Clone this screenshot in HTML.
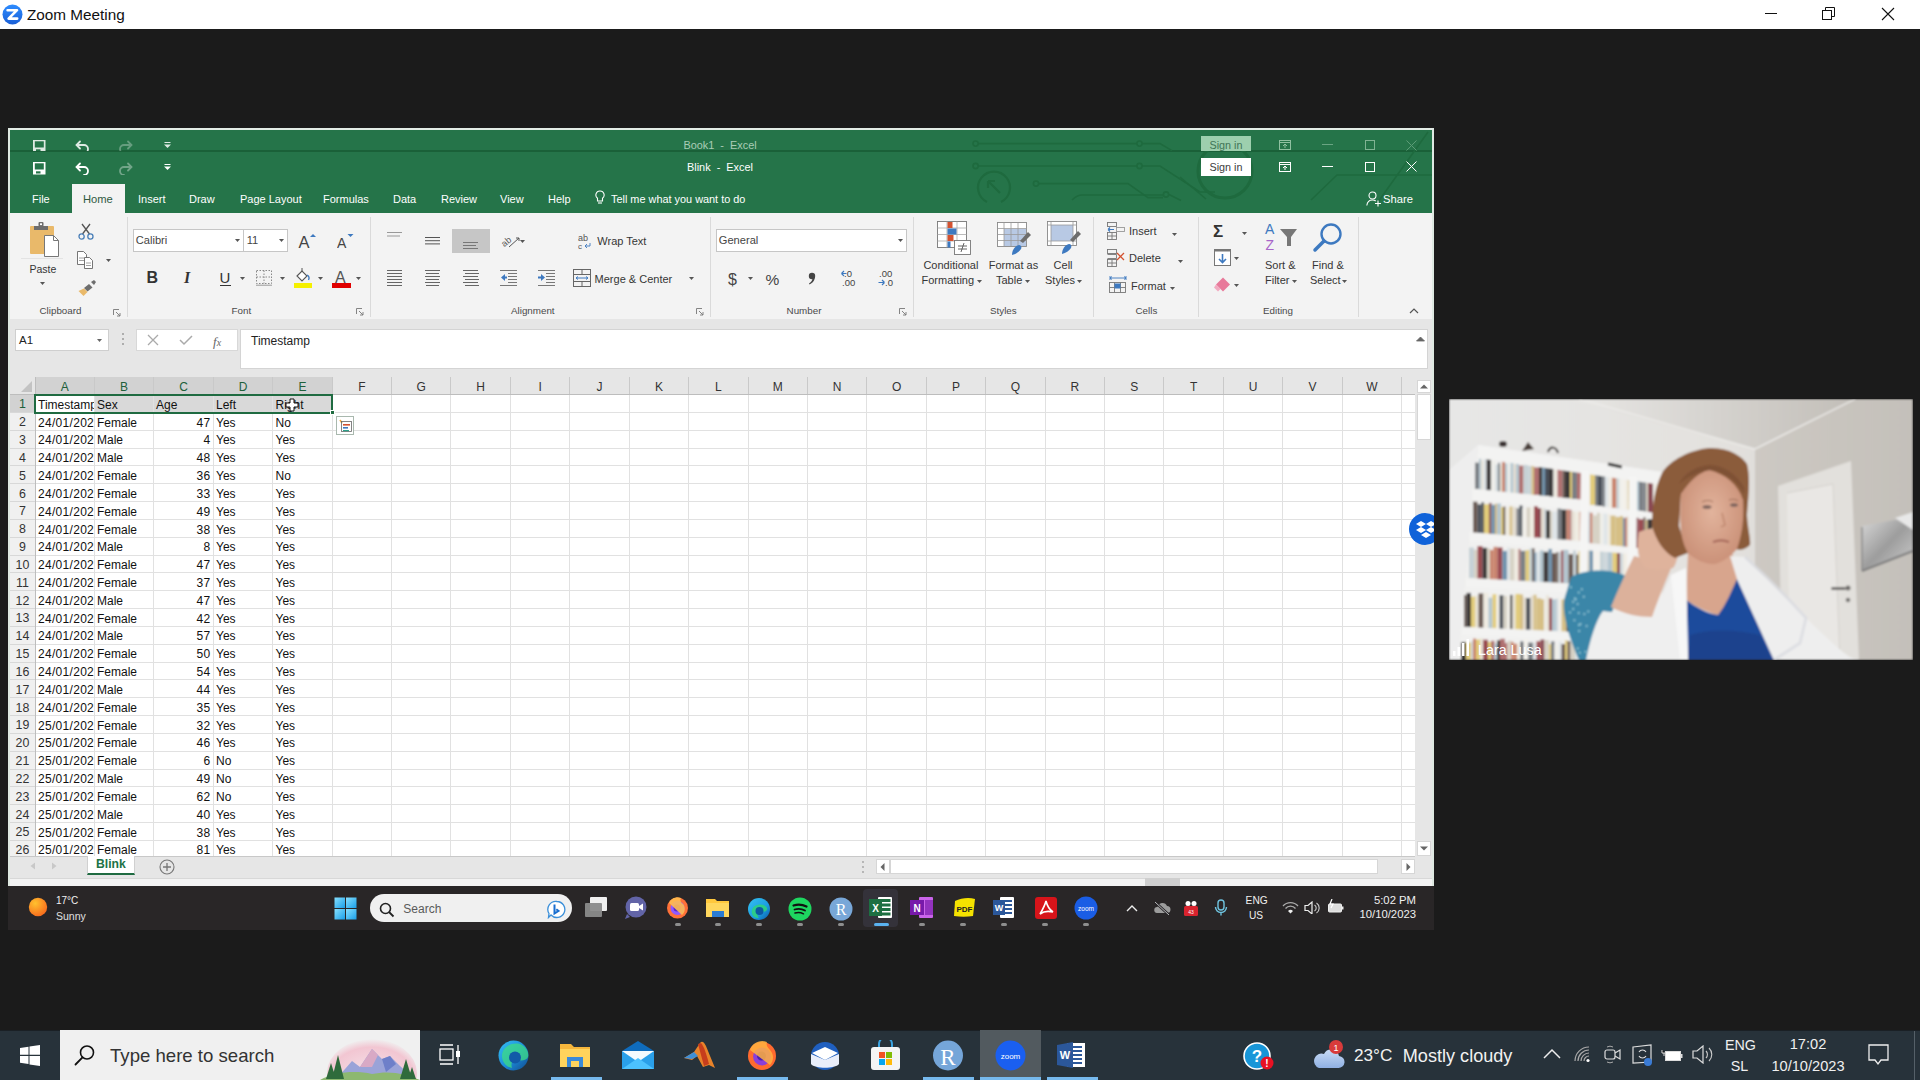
<!DOCTYPE html>
<html><head><meta charset="utf-8">
<style>
*{margin:0;padding:0;box-sizing:border-box}
html,body{width:1920px;height:1080px;overflow:hidden;background:#1b1b1b;font-family:"Liberation Sans",sans-serif;position:relative}
div,span,svg{position:absolute}
.t{white-space:pre;line-height:1}
.w{color:#fff}

</style></head><body>
<div style="left:0px;top:0px;width:1920px;height:29px;background:#fff;"></div>
<svg style="left:2px;top:4px;" width="21" height="21" viewBox="0 0 21 21"><defs><linearGradient id="zg" x1="0" y1="0" x2="0" y2="1"><stop offset="0" stop-color="#2d8cff"/><stop offset="1" stop-color="#1a5fd6"/></linearGradient></defs><circle cx="10.5" cy="10.5" r="10" fill="url(#zg)"/><path d="M5.6 6.2h9.4l-8.4 8.4h8.6" fill="none" stroke="#fff" stroke-width="2.6" stroke-linejoin="round" stroke-linecap="round"/></svg>
<div class="t" style="left:27.0px;top:7.0px;font-size:15.3px;color:#111;">Zoom Meeting</div>
<div style="left:1765px;top:13px;width:12px;height:1px;background:#111;"></div>
<svg style="left:1822px;top:7px;" width="14" height="14" viewBox="0 0 14 14"><rect x="0.5" y="3.5" width="9" height="9" fill="none" stroke="#111"/><path d="M3.5 3.5V0.5h9v9h-3" fill="none" stroke="#111"/></svg>
<svg style="left:1881px;top:7px;" width="14" height="14" viewBox="0 0 14 14"><path d="M1 1L13 13M13 1L1 13" stroke="#111" stroke-width="1.1"/></svg>
<div style="left:8px;top:128px;width:1426px;height:758px;background:#f3f3f3;"></div>
<div style="left:8px;top:128px;width:1426px;height:2px;background:#e3ece6;"></div>
<div style="left:8px;top:128px;width:2px;height:758px;background:#dfe9e2;"></div>
<div style="left:1432px;top:128px;width:2px;height:758px;background:#dfe9e2;"></div>
<div style="left:10px;top:130px;width:1422px;height:83px;background:#257449;"></div>
<div style="left:10px;top:150px;width:1422px;height:2px;background:#1a6038;"></div>
<svg style="left:10px;top:130px" width="1422" height="83" viewBox="10 130 1422 83"><g fill="none" stroke="#1e6a3e" stroke-width="1.6"><path d="M978 143.6H1137M1142 143.6H1160l12 7"/><circle cx="975.6" cy="143.6" r="2.6"/><circle cx="1139.5" cy="143.6" r="2.6"/><path d="M978 166H1137M1142 166H1160l40 26H1215"/><circle cx="975.6" cy="166" r="2.6"/><circle cx="1139.5" cy="166" r="2.6"/><path d="M1039 183.6H1128l20 14H1163M1169 194.5l12 6"/><circle cx="1036" cy="183.6" r="2.6"/><circle cx="1166" cy="194.5" r="2.6"/><path d="M1072 200c3-3 6-5 10-5H1163"/><path d="M987 202a16 16 0 1 1 14 0" stroke-width="2.2"/><path d="M988 181l12 12M988 181h7M988 181v7" stroke-width="2.2"/><circle cx="1225" cy="171" r="27" stroke-width="3"/><path d="M1180 177l26 22"/><path d="M1311 200l26-25H1432"/><path d="M1378 202l50-70"/></g></svg>
<div style="left:10px;top:130px;width:1422px;height:21px;overflow:hidden">
<div style="left:-10px;top:-130px;width:1920px;height:300px">
<svg style="left:33px;top:140px;" width="13" height="13" viewBox="0 0 13 13"><g opacity="0.85"><rect x="0" y="0" width="12.5" height="12.5" fill="#fff"/><rect x="1.8" y="1.3" width="9" height="6.2" fill="#257449"/><rect x="3" y="9.3" width="4.5" height="2.2" fill="#257449"/></g></svg>
<svg style="left:75px;top:140px;" width="15" height="13" viewBox="0 0 15 13"><g opacity="0.85" fill="none" stroke="#fff" stroke-width="1.8" stroke-linecap="round"><path d="M2 5h7a4 4 0 0 1 0 8"/><path d="M5 1.5L1.5 5 5 8.5"/></g></svg>
<svg style="left:118px;top:140px;" width="15" height="13" viewBox="0 0 15 13"><g opacity="0.2975" fill="none" stroke="#fff" stroke-width="1.8" stroke-linecap="round"><path d="M13 5h-7a4 4 0 0 0 0 8"/><path d="M10 1.5L13.5 5 10 8.5"/></g></svg>
<svg style="left:164px;top:142px;" width="7" height="7" viewBox="0 0 7 7"><g opacity="0.85" fill="#fff"><rect x="0.5" y="0" width="6" height="1"/><path d="M0 2.5h7L3.5 6z"/></g></svg>
<div class="t" style="left:520.0px;top:139.8px;width:400px;text-align:center;font-size:10.9px;color:#a9cdb6;">Book1  -  Excel</div>
<div style="left:1201px;top:136px;width:50px;height:22px;background:#9dcfae;"></div>
<div class="t" style="left:1026.0px;top:139.9px;width:400px;text-align:center;font-size:10.8px;color:#3f7556;">Sign in</div>
<svg style="left:1279px;top:140px;" width="12" height="10" viewBox="0 0 12 10"><g fill="none" stroke="#8fc0a0"><rect x="0.5" y="0.5" width="11" height="9"/><path d="M0.5 2.5h11M6 8V4M4 6l2-2 2 2"/></g></svg>
<div style="left:1322px;top:144px;width:11px;height:1px;background:#6aa583;"></div>
<svg style="left:1365px;top:140px;" width="10" height="10" viewBox="0 0 10 10"><rect x="0.5" y="0.5" width="9" height="9" fill="none" stroke="#7fb393"/></svg>
<svg style="left:1406px;top:140px;" width="11" height="11" viewBox="0 0 11 11"><path d="M0.5 0.5l10 10M10.5 0.5l-10 10" stroke="#5c9c77"/></svg>
</div></div>
<svg style="left:33px;top:162px;" width="13" height="13" viewBox="0 0 13 13"><g opacity="1"><rect x="0" y="0" width="12.5" height="12.5" fill="#fff"/><rect x="1.8" y="1.3" width="9" height="6.2" fill="#257449"/><rect x="3" y="9.3" width="4.5" height="2.2" fill="#257449"/></g></svg>
<svg style="left:75px;top:162px;" width="15" height="13" viewBox="0 0 15 13"><g opacity="1" fill="none" stroke="#fff" stroke-width="1.8" stroke-linecap="round"><path d="M2 5h7a4 4 0 0 1 0 8"/><path d="M5 1.5L1.5 5 5 8.5"/></g></svg>
<svg style="left:118px;top:162px;" width="15" height="13" viewBox="0 0 15 13"><g opacity="0.35" fill="none" stroke="#fff" stroke-width="1.8" stroke-linecap="round"><path d="M13 5h-7a4 4 0 0 0 0 8"/><path d="M10 1.5L13.5 5 10 8.5"/></g></svg>
<svg style="left:164px;top:164px;" width="7" height="7" viewBox="0 0 7 7"><g opacity="1" fill="#fff"><rect x="0.5" y="0" width="6" height="1"/><path d="M0 2.5h7L3.5 6z"/></g></svg>
<div class="t" style="left:520.0px;top:161.8px;width:400px;text-align:center;font-size:10.9px;color:#fff;">Blink  -  Excel</div>
<div style="left:1201px;top:158px;width:50px;height:18px;background:#fff;"></div>
<div class="t" style="left:1026.0px;top:161.9px;width:400px;text-align:center;font-size:10.8px;color:#404040;">Sign in</div>
<svg style="left:1279px;top:162px;" width="12" height="10" viewBox="0 0 12 10"><g fill="none" stroke="#fff"><rect x="0.5" y="0.5" width="11" height="9"/><path d="M0.5 2.5h11M6 8V4M4 6l2-2 2 2"/></g></svg>
<div style="left:1322px;top:166px;width:11px;height:1px;background:#fff;"></div>
<svg style="left:1365px;top:162px;" width="10" height="10" viewBox="0 0 10 10"><rect x="0.5" y="0.5" width="9" height="9" fill="none" stroke="#fff"/></svg>
<svg style="left:1406px;top:161px;" width="11" height="11" viewBox="0 0 11 11"><path d="M0.5 0.5l10 10M10.5 0.5l-10 10" stroke="#fff"/></svg>
<div style="left:72px;top:184px;width:53px;height:29px;background:#f3f3f3;"></div>
<div class="t" style="left:32.0px;top:194.2px;font-size:11px;color:#fff;">File</div>
<div class="t" style="left:138.0px;top:194.2px;font-size:11px;color:#fff;">Insert</div>
<div class="t" style="left:189.0px;top:194.2px;font-size:11px;color:#fff;">Draw</div>
<div class="t" style="left:240.0px;top:194.2px;font-size:11px;color:#fff;">Page Layout</div>
<div class="t" style="left:323.0px;top:194.2px;font-size:11px;color:#fff;">Formulas</div>
<div class="t" style="left:393.0px;top:194.2px;font-size:11px;color:#fff;">Data</div>
<div class="t" style="left:441.0px;top:194.2px;font-size:11px;color:#fff;">Review</div>
<div class="t" style="left:500.0px;top:194.2px;font-size:11px;color:#fff;">View</div>
<div class="t" style="left:548.0px;top:194.2px;font-size:11px;color:#fff;">Help</div>
<div class="t" style="left:83.0px;top:194.0px;font-size:11.2px;color:#30593f;">Home</div>
<svg style="left:595px;top:190px;" width="10" height="15" viewBox="0 0 10 15"><g fill="none" stroke="#fff" stroke-width="1.1"><path d="M5 1a4 4 0 0 0-2.5 7.2V11h5V8.2A4 4 0 0 0 5 1z"/><path d="M3 13h4"/></g></svg>
<div class="t" style="left:611.0px;top:193.8px;font-size:10.9px;color:#fff;">Tell me what you want to do</div>
<svg style="left:1366px;top:191px;" width="16" height="16" viewBox="0 0 16 16"><g fill="none" stroke="#fff" stroke-width="1.1"><circle cx="6.5" cy="4.5" r="3.5"/><path d="M0.8 14.5c0.5-3.5 2.5-5.5 5.7-5.5 1.5 0 2.5 0.4 3.2 1"/><path d="M12 9.5v6M9 12.5h6"/></g></svg>
<div class="t" style="left:1383.0px;top:193.5px;font-size:11.2px;color:#fff;">Share</div>
<div style="left:127px;top:217px;width:1px;height:100px;background:#dadada;"></div>
<div style="left:370px;top:217px;width:1px;height:100px;background:#dadada;"></div>
<div style="left:710px;top:217px;width:1px;height:100px;background:#dadada;"></div>
<div style="left:913px;top:217px;width:1px;height:100px;background:#dadada;"></div>
<div style="left:1093px;top:217px;width:1px;height:100px;background:#dadada;"></div>
<div style="left:1198px;top:217px;width:1px;height:100px;background:#dadada;"></div>
<div style="left:1358px;top:217px;width:1px;height:100px;background:#dadada;"></div>
<svg style="left:29px;top:222px;" width="32" height="35" viewBox="0 0 32 35"><rect x="1" y="4" width="24" height="28" rx="1" fill="#e9b96a"/><rect x="5" y="4" width="14" height="4" fill="#6d6d6d"/><rect x="9.5" y="0" width="5" height="4.5" rx="1" fill="#6d6d6d"/><rect x="11" y="1.3" width="2" height="1.8" fill="#fff"/><path d="M15.5 13.5h9l5 5v16h-14z" fill="#fff" stroke="#777" stroke-width="1"/><path d="M24.5 13.5v5h5" fill="none" stroke="#777"/></svg>
<div style="left:21px;top:258px;width:42px;height:1px;background:#e3e3e3;"></div>
<div class="t" style="left:29.5px;top:263.7px;font-size:10.5px;color:#363636;">Paste</div>
<svg style="left:40px;top:282px;" width="5" height="3" viewBox="0 0 5 3"><path d="M0 0h5L2.5 3z" fill="#555"/></svg>
<svg style="left:78px;top:223px;" width="16" height="17" viewBox="0 0 16 17"><g fill="none" stroke="#555" stroke-width="1.3"><path d="M4 1l7.5 10M12 1L4.5 11"/></g><g fill="none" stroke="#4a7fb8" stroke-width="1.3"><circle cx="3.6" cy="13.5" r="2.6"/><circle cx="12.4" cy="13.5" r="2.6"/></g></svg>
<svg style="left:77px;top:251px;" width="16" height="18" viewBox="0 0 16 18"><g fill="#fff" stroke="#666" stroke-width="0.9"><path d="M0.5 0.5h6l3 3v10h-9z"/><path d="M7.5 6.5h5l3 3v8h-8z"/></g><g stroke="#8a8a8a" stroke-width="0.8"><path d="M2 7h5M2 9.5h5M9 12h5M9 14.5h5"/></g></svg>
<svg style="left:106px;top:259px;" width="5" height="3" viewBox="0 0 5 3"><path d="M0 0h5L2.5 3z" fill="#555"/></svg>
<svg style="left:78px;top:280px;" width="18" height="16" viewBox="0 0 18 16"><path d="M11 4l3.5 3.5-5 4L6 8z" fill="#6d6d6d"/><path d="M13 2l3-2 2 2-2 3z" fill="#6d6d6d"/><path d="M6 8.5l3.5 3.5L5.5 16 0.5 11z" fill="#e9b96a"/></svg>
<div class="t" style="left:39.5px;top:306.1px;font-size:9.8px;color:#4a4a4a;">Clipboard</div>
<svg style="left:113px;top:309px;" width="8" height="8" viewBox="0 0 8 8"><g fill="none" stroke="#777" stroke-width="0.9"><path d="M0.5 6V0.5H6"/><path d="M3 3l4 4M7 4v3H4"/></g></svg>
<div style="left:133px;top:229px;width:155px;height:23px;background:#fff;border:1px solid #c6c6c6"></div>
<div style="left:243px;top:229px;width:1px;height:23px;background:#c6c6c6;"></div>
<div class="t" style="left:135.8px;top:235.2px;font-size:11.1px;color:#444;">Calibri</div>
<svg style="left:235px;top:239px;" width="5" height="3" viewBox="0 0 5 3"><path d="M0 0h5L2.5 3z" fill="#555"/></svg>
<div class="t" style="left:246.7px;top:235.2px;font-size:11.1px;color:#444;">11</div>
<svg style="left:279px;top:239px;" width="5" height="3" viewBox="0 0 5 3"><path d="M0 0h5L2.5 3z" fill="#555"/></svg>
<svg style="left:298px;top:232px;" width="18" height="18" viewBox="0 0 18 18"><text x="0.5" y="16" font-family="Liberation Sans" font-size="16.5" fill="#444">A</text><path d="M12 5l3-3 3 3z" fill="#3d79c0"/></svg>
<svg style="left:337px;top:232px;" width="17" height="17" viewBox="0 0 17 17"><text x="0" y="16" font-family="Liberation Sans" font-size="14" fill="#444">A</text><path d="M10.5 2h6l-3 3z" fill="#3d79c0"/></svg>
<div class="t" style="left:146.5px;top:270.0px;font-size:16px;color:#333;font-weight:bold">B</div>
<div class="t" style="left:184.0px;top:270.0px;font-size:16px;color:#333;font-style:italic;font-family:Liberation Serif;font-weight:bold">I</div>
<div class="t" style="left:219.5px;top:270.3px;font-size:15px;color:#333;">U</div>
<div style="left:220px;top:284.5px;width:10.5px;height:1.4px;background:#333;"></div>
<svg style="left:240px;top:277px;" width="5" height="3" viewBox="0 0 5 3"><path d="M0 0h5L2.5 3z" fill="#555"/></svg>
<svg style="left:256px;top:270px;" width="17" height="16" viewBox="0 0 17 16"><g fill="none" stroke="#888" stroke-width="1" stroke-dasharray="1.5 1.5"><rect x="0.5" y="0.5" width="15" height="13"/><path d="M8 0.5v13M0.5 7h15"/></g><path d="M0 15.2h16" stroke="#999" stroke-width="1"/></svg>
<svg style="left:280px;top:277px;" width="5" height="3" viewBox="0 0 5 3"><path d="M0 0h5L2.5 3z" fill="#555"/></svg>
<svg style="left:293px;top:268px;" width="20" height="21" viewBox="0 0 20 21"><path d="M4 8l5-5 5 5-5 5z" fill="#fff" stroke="#555" stroke-width="1.1"/><path d="M9 3V0" stroke="#555"/><path d="M14 7c2 1 2.5 3 1.5 5" fill="none" stroke="#3d79c0" stroke-width="1.3"/><rect x="1" y="15" width="18" height="5" fill="#f5f000"/></svg>
<svg style="left:318px;top:277px;" width="5" height="3" viewBox="0 0 5 3"><path d="M0 0h5L2.5 3z" fill="#555"/></svg>
<svg style="left:332px;top:269px;" width="20" height="20" viewBox="0 0 20 20"><text x="3" y="14" font-family="Liberation Sans" font-size="16" fill="#555">A</text><rect x="0" y="14" width="19" height="5" fill="#e00000"/></svg>
<svg style="left:356px;top:277px;" width="5" height="3" viewBox="0 0 5 3"><path d="M0 0h5L2.5 3z" fill="#555"/></svg>
<div class="t" style="left:231.5px;top:306.3px;font-size:9.8px;color:#4a4a4a;">Font</div>
<svg style="left:356px;top:308px;" width="8" height="8" viewBox="0 0 8 8"><g fill="none" stroke="#777" stroke-width="0.9"><path d="M0.5 6V0.5H6"/><path d="M3 3l4 4M7 4v3H4"/></g></svg>
<svg style="left:387px;top:232px;" width="16" height="8.0" viewBox="0 0 16 8.0"><rect x="0" y="0.0" width="15" height="1" fill="#999"/><rect x="0" y="3.5" width="13" height="1" fill="#999"/></svg>
<svg style="left:425px;top:237px;" width="16" height="10.600000000000001" viewBox="0 0 16 10.600000000000001"><rect x="0" y="0.0" width="15" height="1" fill="#555"/><rect x="0" y="3.2" width="15" height="1" fill="#555"/><rect x="0" y="6.4" width="15" height="1" fill="#555"/></svg>
<div style="left:452px;top:229px;width:38px;height:24px;background:#c6c6c6;"></div>
<svg style="left:463px;top:242px;" width="16" height="10" viewBox="0 0 16 10"><rect x="0" y="0" width="15" height="1" fill="#777"/><rect x="0" y="3" width="13" height="1" fill="#777"/><rect x="0" y="6" width="15" height="1" fill="#777"/></svg>
<svg style="left:501px;top:233px;" width="24" height="16" viewBox="0 0 24 16"><text x="0" y="11" transform="rotate(-40 6 8)" font-family="Liberation Sans" font-size="9" fill="#555">ab</text><path d="M8 14l10-9M15 5h3v3" fill="none" stroke="#555" stroke-width="1"/></svg>
<svg style="left:520px;top:240px;" width="5" height="3" viewBox="0 0 5 3"><path d="M0 0h5L2.5 3z" fill="#555"/></svg>
<svg style="left:578px;top:233px;" width="14" height="16" viewBox="0 0 14 16"><text x="0" y="8" font-family="Liberation Sans" font-size="9" fill="#555">ab</text><text x="0" y="15.5" font-family="Liberation Sans" font-size="8" fill="#555">c</text><path d="M12 10v3H7M9 11l-2 2 2 2" fill="none" stroke="#3d79c0" stroke-width="0.9"/></svg>
<div class="t" style="left:597.3px;top:235.9px;font-size:11px;color:#363636;">Wrap Text</div>
<svg style="left:387px;top:270px;" width="16" height="17" viewBox="0 0 16 17"><rect x="0" y="0" width="15" height="1" fill="#666"/><rect x="0" y="3" width="15" height="1" fill="#666"/><rect x="0" y="6" width="15" height="1" fill="#666"/><rect x="0" y="9" width="15" height="1" fill="#666"/><rect x="0" y="12" width="15" height="1" fill="#666"/><rect x="0" y="15" width="15" height="1" fill="#666"/></svg>
<svg style="left:425px;top:270px;" width="16" height="17" viewBox="0 0 16 17"><rect x="0" y="0" width="15" height="1" fill="#666"/><rect x="1" y="3" width="13" height="1" fill="#666"/><rect x="0" y="6" width="15" height="1" fill="#666"/><rect x="1" y="9" width="13" height="1" fill="#666"/><rect x="0" y="12" width="15" height="1" fill="#666"/><rect x="1" y="15" width="13" height="1" fill="#666"/></svg>
<svg style="left:463px;top:270px;" width="16" height="17" viewBox="0 0 16 17"><rect x="0" y="0" width="15" height="1" fill="#666"/><rect x="2" y="3" width="15" height="1" fill="#666"/><rect x="0" y="6" width="15" height="1" fill="#666"/><rect x="2" y="9" width="15" height="1" fill="#666"/><rect x="0" y="12" width="15" height="1" fill="#666"/><rect x="2" y="15" width="15" height="1" fill="#666"/></svg>
<svg style="left:500px;top:270px;" width="18" height="17" viewBox="0 0 18 17"><g fill="#777"><rect x="0" y="0" width="17" height="1"/><rect x="8" y="3" width="9" height="1"/><rect x="8" y="6" width="9" height="1"/><rect x="8" y="9" width="9" height="1"/><rect x="8" y="12" width="9" height="1"/><rect x="0" y="15" width="17" height="1"/></g><path d="M1 7.5l4-3.5v7z" fill="#3d79c0"/><rect x="3" y="6.5" width="4" height="2" fill="#3d79c0"/></svg>
<svg style="left:538px;top:270px;" width="18" height="17" viewBox="0 0 18 17"><g fill="#777"><rect x="0" y="0" width="17" height="1"/><rect x="8" y="3" width="9" height="1"/><rect x="8" y="6" width="9" height="1"/><rect x="8" y="9" width="9" height="1"/><rect x="8" y="12" width="9" height="1"/><rect x="0" y="15" width="17" height="1"/></g><path d="M7 7.5l-4-3.5v7z" fill="#3d79c0"/><rect x="0" y="6.5" width="4" height="2" fill="#3d79c0"/></svg>
<svg style="left:573px;top:269px;" width="18" height="18" viewBox="0 0 18 18"><g fill="none" stroke="#666" stroke-width="1"><rect x="0.5" y="0.5" width="17" height="17"/><path d="M0.5 5.5h17M0.5 12.5h17M9 0.5v5M9 12.5v5"/></g><path d="M3 9h12M3 9l2-1.5M3 9l2 1.5M15 9l-2-1.5M15 9l-2 1.5" stroke="#3d79c0" stroke-width="1" fill="none"/></svg>
<div class="t" style="left:594.6px;top:273.7px;font-size:11px;color:#363636;">Merge &amp; Center</div>
<svg style="left:689px;top:277px;" width="5" height="3" viewBox="0 0 5 3"><path d="M0 0h5L2.5 3z" fill="#555"/></svg>
<div class="t" style="left:511.0px;top:306.1px;font-size:9.8px;color:#4a4a4a;">Alignment</div>
<svg style="left:696px;top:308px;" width="8" height="8" viewBox="0 0 8 8"><g fill="none" stroke="#777" stroke-width="0.9"><path d="M0.5 6V0.5H6"/><path d="M3 3l4 4M7 4v3H4"/></g></svg>
<div style="left:716px;top:229px;width:191px;height:23px;background:#fff;border:1px solid #c6c6c6"></div>
<div class="t" style="left:718.8px;top:235.3px;font-size:11.1px;color:#444;">General</div>
<svg style="left:898px;top:239px;" width="5" height="3" viewBox="0 0 5 3"><path d="M0 0h5L2.5 3z" fill="#555"/></svg>
<div class="t" style="left:728.0px;top:271.5px;font-size:16px;color:#444;">$</div>
<svg style="left:748px;top:277px;" width="5" height="3" viewBox="0 0 5 3"><path d="M0 0h5L2.5 3z" fill="#555"/></svg>
<div class="t" style="left:765.5px;top:271.9px;font-size:15.5px;color:#444;">%</div>
<svg style="left:807px;top:272px;" width="10" height="13" viewBox="0 0 10 13"><circle cx="5" cy="4" r="3.2" fill="#444"/><path d="M7.8 4.5C8 8 6 11 2.5 12.5L2 11.5C4.5 10 5.5 8 5.5 6z" fill="#444"/></svg>
<svg style="left:841px;top:269px;" width="17" height="18" viewBox="0 0 17 18"><text x="3" y="8" font-family="Liberation Sans" font-size="9.5" fill="#444">.0</text><text x="1" y="17" font-family="Liberation Sans" font-size="9.5" fill="#444">.00</text><path d="M0.5 4.5h5M0.5 4.5l2.5-2.5M0.5 4.5l2.5 2.5" stroke="#3d79c0" stroke-width="1.2" fill="none"/></svg>
<svg style="left:878px;top:269px;" width="18" height="18" viewBox="0 0 18 18"><text x="1" y="8" font-family="Liberation Sans" font-size="9.5" fill="#444">.00</text><text x="7" y="17" font-family="Liberation Sans" font-size="9.5" fill="#444">.0</text><path d="M0.5 13.5h6M6.5 13.5L4 11M6.5 13.5L4 16" stroke="#3d79c0" stroke-width="1.2" fill="none"/></svg>
<div class="t" style="left:786.6px;top:306.1px;font-size:9.8px;color:#4a4a4a;">Number</div>
<svg style="left:899px;top:308px;" width="8" height="8" viewBox="0 0 8 8"><g fill="none" stroke="#777" stroke-width="0.9"><path d="M0.5 6V0.5H6"/><path d="M3 3l4 4M7 4v3H4"/></g></svg>
<svg style="left:937px;top:221px;" width="35" height="35" viewBox="0 0 35 35"><g fill="#fff" stroke="#777" stroke-width="0.9"><rect x="0.5" y="0.5" width="29" height="26"/></g><g stroke="#aaa" stroke-width="0.8"><path d="M0.5 7h29M0.5 13.5h29M0.5 20h29M10 0.5v26M20 0.5v26"/></g><rect x="10.5" y="1" width="5" height="6" fill="#d35230"/><rect x="10.5" y="7.5" width="9" height="6" fill="#3d79c0"/><rect x="10.5" y="14" width="6" height="6" fill="#d35230"/><rect x="10.5" y="20.5" width="3" height="6" fill="#3d79c0"/><rect x="17.5" y="19.5" width="16" height="14" fill="#fff" stroke="#777" stroke-width="0.9"/><path d="M21 25h9M21 28h9M27 22l-3 9" stroke="#555" stroke-width="0.9"/></svg>
<div class="t" style="left:923.4px;top:259.9px;font-size:11px;color:#363636;">Conditional</div>
<div class="t" style="left:921.5px;top:275.2px;font-size:11px;color:#363636;">Formatting</div>
<svg style="left:977px;top:280px;" width="5" height="3" viewBox="0 0 5 3"><path d="M0 0h5L2.5 3z" fill="#555"/></svg>
<svg style="left:997px;top:222px;" width="35" height="35" viewBox="0 0 35 35"><rect x="0.5" y="0.5" width="29" height="24" fill="#fff" stroke="#888" stroke-width="0.9"/><rect x="7" y="7" width="22" height="17" fill="#b8c9e4"/><g stroke="#999" stroke-width="0.8"><path d="M0.5 6.5h29M0.5 12.5h29M0.5 18.5h29M7 0.5v24M14 0.5v24M21 0.5v24"/></g><path d="M23 19l8-9 3 3-8 8z" fill="#6d6d6d"/><path d="M15 33c0-5 3-9 7-10 2 0 3 2 2 4-2 3-5 5-9 6z" fill="#3d79c0"/></svg>
<div class="t" style="left:988.7px;top:259.9px;font-size:11px;color:#363636;">Format as</div>
<div class="t" style="left:996.0px;top:275.2px;font-size:11px;color:#363636;">Table</div>
<svg style="left:1025px;top:280px;" width="5" height="3" viewBox="0 0 5 3"><path d="M0 0h5L2.5 3z" fill="#555"/></svg>
<svg style="left:1047px;top:221px;" width="35" height="35" viewBox="0 0 35 35"><rect x="0.5" y="0.5" width="29" height="24" fill="#fff" stroke="#888" stroke-width="0.9"/><rect x="4" y="4" width="22" height="16" fill="#b8c9e4"/><g stroke="#999" stroke-width="0.8"><path d="M0.5 4h29M0.5 20h29M4 0.5v24M26 0.5v24"/></g><path d="M23 19l8-9 3 3-8 8z" fill="#6d6d6d"/><path d="M15 33c0-5 3-9 7-10 2 0 3 2 2 4-2 3-5 5-9 6z" fill="#3d79c0"/></svg>
<div class="t" style="left:1053.6px;top:259.9px;font-size:11px;color:#363636;">Cell</div>
<div class="t" style="left:1045.0px;top:275.2px;font-size:11px;color:#363636;">Styles</div>
<svg style="left:1077px;top:280px;" width="5" height="3" viewBox="0 0 5 3"><path d="M0 0h5L2.5 3z" fill="#555"/></svg>
<div class="t" style="left:990.0px;top:306.1px;font-size:9.8px;color:#4a4a4a;">Styles</div>
<svg style="left:1107px;top:222px;" width="18" height="18" viewBox="0 0 18 18"><g fill="none" stroke="#777" stroke-width="0.9"><rect x="0.5" y="0.5" width="9" height="4"/><rect x="0.5" y="10.5" width="9" height="7"/><path d="M0.5 14h9M5 10.5v7"/><rect x="9.5" y="5.5" width="8" height="4" stroke="#999"/></g><path d="M1 7.5h6M1 7.5l2-2M1 7.5l2 2" stroke="#3d79c0" stroke-width="1.1" fill="none"/></svg>
<div class="t" style="left:1129.0px;top:225.6px;font-size:11px;color:#363636;">Insert</div>
<svg style="left:1172px;top:233px;" width="5" height="3" viewBox="0 0 5 3"><path d="M0 0h5L2.5 3z" fill="#555"/></svg>
<svg style="left:1107px;top:249px;" width="19" height="18" viewBox="0 0 19 18"><g fill="none" stroke="#777" stroke-width="0.9"><rect x="0.5" y="0.5" width="9" height="4"/><rect x="0.5" y="10.5" width="9" height="7"/><path d="M0.5 14h9M5 10.5v7M0.5 5.5h9v4h-9"/></g><path d="M10 4l7 7M17 4l-7 7" stroke="#d35230" stroke-width="1.3"/></svg>
<div class="t" style="left:1129.0px;top:253.4px;font-size:11px;color:#363636;">Delete</div>
<svg style="left:1178px;top:260px;" width="5" height="3" viewBox="0 0 5 3"><path d="M0 0h5L2.5 3z" fill="#555"/></svg>
<svg style="left:1109px;top:276px;" width="19" height="19" viewBox="0 0 19 19"><path d="M1 2h16M1 2l2-1.5M1 2l2 1.5M17 2l-2-1.5M17 2l-2 1.5M1 0v4M17 0v4" stroke="#3d79c0" stroke-width="0.9" fill="none"/><g fill="none" stroke="#777" stroke-width="0.9"><rect x="0.5" y="6.5" width="16" height="10"/><path d="M0.5 11.5h16M5.5 6.5v10M11.5 6.5v10"/></g><rect x="5.5" y="7.5" width="6" height="5" fill="#3d79c0"/></svg>
<div class="t" style="left:1131.0px;top:280.7px;font-size:11px;color:#363636;">Format</div>
<svg style="left:1170px;top:287px;" width="5" height="3" viewBox="0 0 5 3"><path d="M0 0h5L2.5 3z" fill="#555"/></svg>
<div class="t" style="left:1135.5px;top:306.1px;font-size:9.8px;color:#4a4a4a;">Cells</div>
<div class="t" style="left:1213.0px;top:223.1px;font-size:17px;color:#333;font-weight:bold">Σ</div>
<svg style="left:1242px;top:232px;" width="5" height="3" viewBox="0 0 5 3"><path d="M0 0h5L2.5 3z" fill="#555"/></svg>
<svg style="left:1214px;top:249px;" width="18" height="18" viewBox="0 0 18 18"><rect x="0.5" y="0.5" width="16" height="16" fill="#fff" stroke="#777"/><rect x="0.5" y="0.5" width="16" height="2" fill="#777"/><path d="M8.5 5v8M5 10l3.5 3.5L12 10" fill="none" stroke="#3d79c0" stroke-width="1.6"/></svg>
<svg style="left:1234px;top:257px;" width="5" height="3" viewBox="0 0 5 3"><path d="M0 0h5L2.5 3z" fill="#555"/></svg>
<svg style="left:1214px;top:276px;" width="18" height="18" viewBox="0 0 18 18"><path d="M9 1.5l7 7-7 7-7-7z" fill="#e8799a" transform="rotate(0)"/><path d="M2 8.5l4.5 4.5-2.5 2.5L0 11.5z" fill="#f2aac0"/></svg>
<svg style="left:1234px;top:284px;" width="5" height="3" viewBox="0 0 5 3"><path d="M0 0h5L2.5 3z" fill="#555"/></svg>
<svg style="left:1264px;top:221px;" width="36" height="32" viewBox="0 0 36 32"><text x="1" y="13" font-family="Liberation Sans" font-size="14" fill="#3d79c0">A</text><text x="1.5" y="29" font-family="Liberation Sans" font-size="14" fill="#a865c9">Z</text><path d="M16 8h17l-6 8v9h-4v-9z" fill="#777"/></svg>
<div class="t" style="left:1265.0px;top:259.7px;font-size:11px;color:#363636;">Sort &amp;</div>
<div class="t" style="left:1265.0px;top:275.2px;font-size:11px;color:#363636;">Filter</div>
<svg style="left:1292px;top:280px;" width="5" height="3" viewBox="0 0 5 3"><path d="M0 0h5L2.5 3z" fill="#555"/></svg>
<svg style="left:1312px;top:222px;" width="32" height="32" viewBox="0 0 32 32"><circle cx="19" cy="12" r="9.5" fill="none" stroke="#3d79c0" stroke-width="2.4"/><path d="M12 19l-9 9" stroke="#3d79c0" stroke-width="3.5" stroke-linecap="round"/></svg>
<div class="t" style="left:1312.0px;top:259.7px;font-size:11px;color:#363636;">Find &amp;</div>
<div class="t" style="left:1310.0px;top:275.2px;font-size:11px;color:#363636;">Select</div>
<svg style="left:1342px;top:280px;" width="5" height="3" viewBox="0 0 5 3"><path d="M0 0h5L2.5 3z" fill="#555"/></svg>
<div class="t" style="left:1263.0px;top:306.1px;font-size:9.8px;color:#4a4a4a;">Editing</div>
<svg style="left:1409px;top:307px;" width="10" height="7" viewBox="0 0 10 7"><path d="M1 6l4-4 4 4" fill="none" stroke="#555" stroke-width="1.2"/></svg>
<div style="left:10px;top:319px;width:1422px;height:58px;background:#e6e6e6;"></div>
<div style="left:15px;top:329px;width:94px;height:22px;background:#fff;border:1px solid #cfcfcf"></div>
<div class="t" style="left:19.0px;top:334.8px;font-size:11.5px;color:#222;">A1</div>
<svg style="left:97px;top:339px;" width="5" height="3" viewBox="0 0 5 3"><path d="M0 0h5L2.5 3z" fill="#666"/></svg>
<svg style="left:121px;top:332px;" width="4" height="14" viewBox="0 0 4 14"><g fill="#9a9a9a"><circle cx="2" cy="2" r="1"/><circle cx="2" cy="7" r="1"/><circle cx="2" cy="12" r="1"/></g></svg>
<div style="left:136px;top:329px;width:102px;height:22px;background:#fff;border:1px solid #d8d8d8"></div>
<svg style="left:147px;top:334px;" width="12" height="12" viewBox="0 0 12 12"><path d="M1 1l10 10M11 1L1 11" stroke="#aaa" stroke-width="1.3"/></svg>
<svg style="left:179px;top:334px;" width="14" height="12" viewBox="0 0 14 12"><path d="M1 6l4 4 8-8" fill="none" stroke="#aaa" stroke-width="1.5"/></svg>
<div class="t" style="left:213.0px;top:335.0px;font-size:13px;color:#666;font-family:Liberation Serif"><i>f</i><i style="font-size:10px">x</i></div>
<div style="left:240px;top:329px;width:1188px;height:40px;background:#fff;border:1px solid #d4d4d4"></div>
<div class="t" style="left:251.0px;top:334.8px;font-size:12px;color:#222;">Timestamp</div>
<svg style="left:1416px;top:336px;" width="9" height="6" viewBox="0 0 9 6"><path d="M0.5 5l4-4 4 4z" fill="#666" stroke="#666" stroke-width="0.8"/></svg>
<div style="left:10px;top:377px;width:1405px;height:479px;background:#fff;"></div>
<div style="left:10px;top:377px;width:1405px;height:17px;background:#e6e6e6;"></div>
<div style="left:35.0px;top:377px;width:297.1px;height:17px;background:#d2d2d2;"></div>
<div style="left:10px;top:394px;width:25px;height:462px;background:#f0f0f0;"></div>
<div style="left:10px;top:394.6px;width:25px;height:17.83px;background:#d2d2d2;"></div>
<svg style="left:21px;top:381px;" width="12" height="11" viewBox="0 0 12 11"><path d="M11 0v11H0z" fill="#c3c3c3"/></svg>
<div style="left:94.42px;top:394.6px;width:237.68px;height:17.83px;background:#d9d9d9;"></div>
<div style="left:93.92px;top:377px;width:1px;height:17px;background:#c9c9c9"></div><div style="left:93.92px;top:394px;width:1px;height:462px;background:#e1e1e1"></div><div style="left:153.34px;top:377px;width:1px;height:17px;background:#c9c9c9"></div><div style="left:153.34px;top:394px;width:1px;height:462px;background:#e1e1e1"></div><div style="left:212.76px;top:377px;width:1px;height:17px;background:#c9c9c9"></div><div style="left:212.76px;top:394px;width:1px;height:462px;background:#e1e1e1"></div><div style="left:272.18px;top:377px;width:1px;height:17px;background:#c9c9c9"></div><div style="left:272.18px;top:394px;width:1px;height:462px;background:#e1e1e1"></div><div style="left:331.60px;top:377px;width:1px;height:17px;background:#c9c9c9"></div><div style="left:331.60px;top:394px;width:1px;height:462px;background:#e1e1e1"></div><div style="left:391.02px;top:377px;width:1px;height:17px;background:#c9c9c9"></div><div style="left:391.02px;top:394px;width:1px;height:462px;background:#e1e1e1"></div><div style="left:450.44px;top:377px;width:1px;height:17px;background:#c9c9c9"></div><div style="left:450.44px;top:394px;width:1px;height:462px;background:#e1e1e1"></div><div style="left:509.86px;top:377px;width:1px;height:17px;background:#c9c9c9"></div><div style="left:509.86px;top:394px;width:1px;height:462px;background:#e1e1e1"></div><div style="left:569.28px;top:377px;width:1px;height:17px;background:#c9c9c9"></div><div style="left:569.28px;top:394px;width:1px;height:462px;background:#e1e1e1"></div><div style="left:628.70px;top:377px;width:1px;height:17px;background:#c9c9c9"></div><div style="left:628.70px;top:394px;width:1px;height:462px;background:#e1e1e1"></div><div style="left:688.12px;top:377px;width:1px;height:17px;background:#c9c9c9"></div><div style="left:688.12px;top:394px;width:1px;height:462px;background:#e1e1e1"></div><div style="left:747.54px;top:377px;width:1px;height:17px;background:#c9c9c9"></div><div style="left:747.54px;top:394px;width:1px;height:462px;background:#e1e1e1"></div><div style="left:806.96px;top:377px;width:1px;height:17px;background:#c9c9c9"></div><div style="left:806.96px;top:394px;width:1px;height:462px;background:#e1e1e1"></div><div style="left:866.38px;top:377px;width:1px;height:17px;background:#c9c9c9"></div><div style="left:866.38px;top:394px;width:1px;height:462px;background:#e1e1e1"></div><div style="left:925.80px;top:377px;width:1px;height:17px;background:#c9c9c9"></div><div style="left:925.80px;top:394px;width:1px;height:462px;background:#e1e1e1"></div><div style="left:985.22px;top:377px;width:1px;height:17px;background:#c9c9c9"></div><div style="left:985.22px;top:394px;width:1px;height:462px;background:#e1e1e1"></div><div style="left:1044.64px;top:377px;width:1px;height:17px;background:#c9c9c9"></div><div style="left:1044.64px;top:394px;width:1px;height:462px;background:#e1e1e1"></div><div style="left:1104.06px;top:377px;width:1px;height:17px;background:#c9c9c9"></div><div style="left:1104.06px;top:394px;width:1px;height:462px;background:#e1e1e1"></div><div style="left:1163.48px;top:377px;width:1px;height:17px;background:#c9c9c9"></div><div style="left:1163.48px;top:394px;width:1px;height:462px;background:#e1e1e1"></div><div style="left:1222.90px;top:377px;width:1px;height:17px;background:#c9c9c9"></div><div style="left:1222.90px;top:394px;width:1px;height:462px;background:#e1e1e1"></div><div style="left:1282.32px;top:377px;width:1px;height:17px;background:#c9c9c9"></div><div style="left:1282.32px;top:394px;width:1px;height:462px;background:#e1e1e1"></div><div style="left:1341.74px;top:377px;width:1px;height:17px;background:#c9c9c9"></div><div style="left:1341.74px;top:394px;width:1px;height:462px;background:#e1e1e1"></div><div style="left:1401.16px;top:377px;width:1px;height:17px;background:#c9c9c9"></div><div style="left:1401.16px;top:394px;width:1px;height:462px;background:#e1e1e1"></div><div style="left:35px;top:394.10px;width:1380px;height:1px;background:#e1e1e1"></div><div style="left:10px;top:394.10px;width:25px;height:1px;background:#d8d8d8"></div><div style="left:35px;top:411.93px;width:1380px;height:1px;background:#e1e1e1"></div><div style="left:10px;top:411.93px;width:25px;height:1px;background:#d8d8d8"></div><div style="left:35px;top:429.76px;width:1380px;height:1px;background:#e1e1e1"></div><div style="left:10px;top:429.76px;width:25px;height:1px;background:#d8d8d8"></div><div style="left:35px;top:447.59px;width:1380px;height:1px;background:#e1e1e1"></div><div style="left:10px;top:447.59px;width:25px;height:1px;background:#d8d8d8"></div><div style="left:35px;top:465.42px;width:1380px;height:1px;background:#e1e1e1"></div><div style="left:10px;top:465.42px;width:25px;height:1px;background:#d8d8d8"></div><div style="left:35px;top:483.25px;width:1380px;height:1px;background:#e1e1e1"></div><div style="left:10px;top:483.25px;width:25px;height:1px;background:#d8d8d8"></div><div style="left:35px;top:501.08px;width:1380px;height:1px;background:#e1e1e1"></div><div style="left:10px;top:501.08px;width:25px;height:1px;background:#d8d8d8"></div><div style="left:35px;top:518.91px;width:1380px;height:1px;background:#e1e1e1"></div><div style="left:10px;top:518.91px;width:25px;height:1px;background:#d8d8d8"></div><div style="left:35px;top:536.74px;width:1380px;height:1px;background:#e1e1e1"></div><div style="left:10px;top:536.74px;width:25px;height:1px;background:#d8d8d8"></div><div style="left:35px;top:554.57px;width:1380px;height:1px;background:#e1e1e1"></div><div style="left:10px;top:554.57px;width:25px;height:1px;background:#d8d8d8"></div><div style="left:35px;top:572.40px;width:1380px;height:1px;background:#e1e1e1"></div><div style="left:10px;top:572.40px;width:25px;height:1px;background:#d8d8d8"></div><div style="left:35px;top:590.23px;width:1380px;height:1px;background:#e1e1e1"></div><div style="left:10px;top:590.23px;width:25px;height:1px;background:#d8d8d8"></div><div style="left:35px;top:608.06px;width:1380px;height:1px;background:#e1e1e1"></div><div style="left:10px;top:608.06px;width:25px;height:1px;background:#d8d8d8"></div><div style="left:35px;top:625.89px;width:1380px;height:1px;background:#e1e1e1"></div><div style="left:10px;top:625.89px;width:25px;height:1px;background:#d8d8d8"></div><div style="left:35px;top:643.72px;width:1380px;height:1px;background:#e1e1e1"></div><div style="left:10px;top:643.72px;width:25px;height:1px;background:#d8d8d8"></div><div style="left:35px;top:661.55px;width:1380px;height:1px;background:#e1e1e1"></div><div style="left:10px;top:661.55px;width:25px;height:1px;background:#d8d8d8"></div><div style="left:35px;top:679.38px;width:1380px;height:1px;background:#e1e1e1"></div><div style="left:10px;top:679.38px;width:25px;height:1px;background:#d8d8d8"></div><div style="left:35px;top:697.21px;width:1380px;height:1px;background:#e1e1e1"></div><div style="left:10px;top:697.21px;width:25px;height:1px;background:#d8d8d8"></div><div style="left:35px;top:715.04px;width:1380px;height:1px;background:#e1e1e1"></div><div style="left:10px;top:715.04px;width:25px;height:1px;background:#d8d8d8"></div><div style="left:35px;top:732.87px;width:1380px;height:1px;background:#e1e1e1"></div><div style="left:10px;top:732.87px;width:25px;height:1px;background:#d8d8d8"></div><div style="left:35px;top:750.70px;width:1380px;height:1px;background:#e1e1e1"></div><div style="left:10px;top:750.70px;width:25px;height:1px;background:#d8d8d8"></div><div style="left:35px;top:768.53px;width:1380px;height:1px;background:#e1e1e1"></div><div style="left:10px;top:768.53px;width:25px;height:1px;background:#d8d8d8"></div><div style="left:35px;top:786.36px;width:1380px;height:1px;background:#e1e1e1"></div><div style="left:10px;top:786.36px;width:25px;height:1px;background:#d8d8d8"></div><div style="left:35px;top:804.19px;width:1380px;height:1px;background:#e1e1e1"></div><div style="left:10px;top:804.19px;width:25px;height:1px;background:#d8d8d8"></div><div style="left:35px;top:822.02px;width:1380px;height:1px;background:#e1e1e1"></div><div style="left:10px;top:822.02px;width:25px;height:1px;background:#d8d8d8"></div><div style="left:35px;top:839.85px;width:1380px;height:1px;background:#e1e1e1"></div><div style="left:10px;top:839.85px;width:25px;height:1px;background:#d8d8d8"></div><div style="left:35px;top:857.68px;width:1380px;height:1px;background:#e1e1e1"></div><div style="left:10px;top:857.68px;width:25px;height:1px;background:#d8d8d8"></div>
<div style="left:10px;top:393.5px;width:1405px;height:1px;background:#bdbdbd;"></div>
<div style="left:34.5px;top:377px;width:1px;height:479px;background:#bdbdbd;"></div>
<div class="t" style="left:-135.3px;top:380.8px;width:400px;text-align:center;font-size:12px;color:#20603a;">A</div>
<div class="t" style="left:-75.9px;top:380.8px;width:400px;text-align:center;font-size:12px;color:#20603a;">B</div>
<div class="t" style="left:-16.4px;top:380.8px;width:400px;text-align:center;font-size:12px;color:#20603a;">C</div>
<div class="t" style="left:43.0px;top:380.8px;width:400px;text-align:center;font-size:12px;color:#20603a;">D</div>
<div class="t" style="left:102.4px;top:380.8px;width:400px;text-align:center;font-size:12px;color:#20603a;">E</div>
<div class="t" style="left:161.8px;top:380.8px;width:400px;text-align:center;font-size:12px;color:#333;">F</div>
<div class="t" style="left:221.2px;top:380.8px;width:400px;text-align:center;font-size:12px;color:#333;">G</div>
<div class="t" style="left:280.6px;top:380.8px;width:400px;text-align:center;font-size:12px;color:#333;">H</div>
<div class="t" style="left:340.1px;top:380.8px;width:400px;text-align:center;font-size:12px;color:#333;">I</div>
<div class="t" style="left:399.5px;top:380.8px;width:400px;text-align:center;font-size:12px;color:#333;">J</div>
<div class="t" style="left:458.9px;top:380.8px;width:400px;text-align:center;font-size:12px;color:#333;">K</div>
<div class="t" style="left:518.3px;top:380.8px;width:400px;text-align:center;font-size:12px;color:#333;">L</div>
<div class="t" style="left:577.8px;top:380.8px;width:400px;text-align:center;font-size:12px;color:#333;">M</div>
<div class="t" style="left:637.2px;top:380.8px;width:400px;text-align:center;font-size:12px;color:#333;">N</div>
<div class="t" style="left:696.6px;top:380.8px;width:400px;text-align:center;font-size:12px;color:#333;">O</div>
<div class="t" style="left:756.0px;top:380.8px;width:400px;text-align:center;font-size:12px;color:#333;">P</div>
<div class="t" style="left:815.4px;top:380.8px;width:400px;text-align:center;font-size:12px;color:#333;">Q</div>
<div class="t" style="left:874.8px;top:380.8px;width:400px;text-align:center;font-size:12px;color:#333;">R</div>
<div class="t" style="left:934.3px;top:380.8px;width:400px;text-align:center;font-size:12px;color:#333;">S</div>
<div class="t" style="left:993.7px;top:380.8px;width:400px;text-align:center;font-size:12px;color:#333;">T</div>
<div class="t" style="left:1053.1px;top:380.8px;width:400px;text-align:center;font-size:12px;color:#333;">U</div>
<div class="t" style="left:1112.5px;top:380.8px;width:400px;text-align:center;font-size:12px;color:#333;">V</div>
<div class="t" style="left:1172.0px;top:380.8px;width:400px;text-align:center;font-size:12px;color:#333;">W</div>
<div class="t" style="left:10px;width:25px;text-align:center;top:398.4px;font-size:12.4px;color:#20603a">1</div><div class="t" style="left:38px;top:398.6px;font-size:12px;color:#111;width:56px;overflow:hidden">Timestamp</div><div class="t" style="left:97px;top:398.6px;font-size:12px;color:#111">Sex</div><div class="t" style="left:156px;top:398.6px;font-size:12px;color:#111">Age</div><div class="t" style="left:216px;top:398.6px;font-size:12px;color:#111">Left</div><div class="t" style="left:275.5px;top:398.6px;font-size:12px;color:#111">Right</div><div class="t" style="left:10px;width:25px;text-align:center;top:416.3px;font-size:12.4px;color:#333">2</div><div class="t" style="left:38px;top:416.5px;font-size:12px;letter-spacing:0.3px;color:#111;width:56px;overflow:hidden">24/01/202</div><div class="t" style="left:97px;top:416.5px;font-size:12px;color:#111">Female</div><div class="t" style="right:1709.5px;top:416.5px;font-size:12px;letter-spacing:0.3px;color:#111">47</div><div class="t" style="left:216px;top:416.5px;font-size:12px;color:#111">Yes</div><div class="t" style="left:275.5px;top:416.5px;font-size:12px;color:#111">No</div><div class="t" style="left:10px;width:25px;text-align:center;top:434.1px;font-size:12.4px;color:#333">3</div><div class="t" style="left:38px;top:434.3px;font-size:12px;letter-spacing:0.3px;color:#111;width:56px;overflow:hidden">24/01/202</div><div class="t" style="left:97px;top:434.3px;font-size:12px;color:#111">Male</div><div class="t" style="right:1709.5px;top:434.3px;font-size:12px;letter-spacing:0.3px;color:#111">4</div><div class="t" style="left:216px;top:434.3px;font-size:12px;color:#111">Yes</div><div class="t" style="left:275.5px;top:434.3px;font-size:12px;color:#111">Yes</div><div class="t" style="left:10px;width:25px;text-align:center;top:451.9px;font-size:12.4px;color:#333">4</div><div class="t" style="left:38px;top:452.1px;font-size:12px;letter-spacing:0.3px;color:#111;width:56px;overflow:hidden">24/01/202</div><div class="t" style="left:97px;top:452.1px;font-size:12px;color:#111">Male</div><div class="t" style="right:1709.5px;top:452.1px;font-size:12px;letter-spacing:0.3px;color:#111">48</div><div class="t" style="left:216px;top:452.1px;font-size:12px;color:#111">Yes</div><div class="t" style="left:275.5px;top:452.1px;font-size:12px;color:#111">Yes</div><div class="t" style="left:10px;width:25px;text-align:center;top:469.8px;font-size:12.4px;color:#333">5</div><div class="t" style="left:38px;top:470.0px;font-size:12px;letter-spacing:0.3px;color:#111;width:56px;overflow:hidden">24/01/202</div><div class="t" style="left:97px;top:470.0px;font-size:12px;color:#111">Female</div><div class="t" style="right:1709.5px;top:470.0px;font-size:12px;letter-spacing:0.3px;color:#111">36</div><div class="t" style="left:216px;top:470.0px;font-size:12px;color:#111">Yes</div><div class="t" style="left:275.5px;top:470.0px;font-size:12px;color:#111">No</div><div class="t" style="left:10px;width:25px;text-align:center;top:487.6px;font-size:12.4px;color:#333">6</div><div class="t" style="left:38px;top:487.8px;font-size:12px;letter-spacing:0.3px;color:#111;width:56px;overflow:hidden">24/01/202</div><div class="t" style="left:97px;top:487.8px;font-size:12px;color:#111">Female</div><div class="t" style="right:1709.5px;top:487.8px;font-size:12px;letter-spacing:0.3px;color:#111">33</div><div class="t" style="left:216px;top:487.8px;font-size:12px;color:#111">Yes</div><div class="t" style="left:275.5px;top:487.8px;font-size:12px;color:#111">Yes</div><div class="t" style="left:10px;width:25px;text-align:center;top:505.4px;font-size:12.4px;color:#333">7</div><div class="t" style="left:38px;top:505.6px;font-size:12px;letter-spacing:0.3px;color:#111;width:56px;overflow:hidden">24/01/202</div><div class="t" style="left:97px;top:505.6px;font-size:12px;color:#111">Female</div><div class="t" style="right:1709.5px;top:505.6px;font-size:12px;letter-spacing:0.3px;color:#111">49</div><div class="t" style="left:216px;top:505.6px;font-size:12px;color:#111">Yes</div><div class="t" style="left:275.5px;top:505.6px;font-size:12px;color:#111">Yes</div><div class="t" style="left:10px;width:25px;text-align:center;top:523.3px;font-size:12.4px;color:#333">8</div><div class="t" style="left:38px;top:523.5px;font-size:12px;letter-spacing:0.3px;color:#111;width:56px;overflow:hidden">24/01/202</div><div class="t" style="left:97px;top:523.5px;font-size:12px;color:#111">Female</div><div class="t" style="right:1709.5px;top:523.5px;font-size:12px;letter-spacing:0.3px;color:#111">38</div><div class="t" style="left:216px;top:523.5px;font-size:12px;color:#111">Yes</div><div class="t" style="left:275.5px;top:523.5px;font-size:12px;color:#111">Yes</div><div class="t" style="left:10px;width:25px;text-align:center;top:541.1px;font-size:12.4px;color:#333">9</div><div class="t" style="left:38px;top:541.3px;font-size:12px;letter-spacing:0.3px;color:#111;width:56px;overflow:hidden">24/01/202</div><div class="t" style="left:97px;top:541.3px;font-size:12px;color:#111">Male</div><div class="t" style="right:1709.5px;top:541.3px;font-size:12px;letter-spacing:0.3px;color:#111">8</div><div class="t" style="left:216px;top:541.3px;font-size:12px;color:#111">Yes</div><div class="t" style="left:275.5px;top:541.3px;font-size:12px;color:#111">Yes</div><div class="t" style="left:10px;width:25px;text-align:center;top:558.9px;font-size:12.4px;color:#333">10</div><div class="t" style="left:38px;top:559.1px;font-size:12px;letter-spacing:0.3px;color:#111;width:56px;overflow:hidden">24/01/202</div><div class="t" style="left:97px;top:559.1px;font-size:12px;color:#111">Female</div><div class="t" style="right:1709.5px;top:559.1px;font-size:12px;letter-spacing:0.3px;color:#111">47</div><div class="t" style="left:216px;top:559.1px;font-size:12px;color:#111">Yes</div><div class="t" style="left:275.5px;top:559.1px;font-size:12px;color:#111">Yes</div><div class="t" style="left:10px;width:25px;text-align:center;top:576.7px;font-size:12.4px;color:#333">11</div><div class="t" style="left:38px;top:576.9px;font-size:12px;letter-spacing:0.3px;color:#111;width:56px;overflow:hidden">24/01/202</div><div class="t" style="left:97px;top:576.9px;font-size:12px;color:#111">Female</div><div class="t" style="right:1709.5px;top:576.9px;font-size:12px;letter-spacing:0.3px;color:#111">37</div><div class="t" style="left:216px;top:576.9px;font-size:12px;color:#111">Yes</div><div class="t" style="left:275.5px;top:576.9px;font-size:12px;color:#111">Yes</div><div class="t" style="left:10px;width:25px;text-align:center;top:594.6px;font-size:12.4px;color:#333">12</div><div class="t" style="left:38px;top:594.8px;font-size:12px;letter-spacing:0.3px;color:#111;width:56px;overflow:hidden">24/01/202</div><div class="t" style="left:97px;top:594.8px;font-size:12px;color:#111">Male</div><div class="t" style="right:1709.5px;top:594.8px;font-size:12px;letter-spacing:0.3px;color:#111">47</div><div class="t" style="left:216px;top:594.8px;font-size:12px;color:#111">Yes</div><div class="t" style="left:275.5px;top:594.8px;font-size:12px;color:#111">Yes</div><div class="t" style="left:10px;width:25px;text-align:center;top:612.4px;font-size:12.4px;color:#333">13</div><div class="t" style="left:38px;top:612.6px;font-size:12px;letter-spacing:0.3px;color:#111;width:56px;overflow:hidden">24/01/202</div><div class="t" style="left:97px;top:612.6px;font-size:12px;color:#111">Female</div><div class="t" style="right:1709.5px;top:612.6px;font-size:12px;letter-spacing:0.3px;color:#111">42</div><div class="t" style="left:216px;top:612.6px;font-size:12px;color:#111">Yes</div><div class="t" style="left:275.5px;top:612.6px;font-size:12px;color:#111">Yes</div><div class="t" style="left:10px;width:25px;text-align:center;top:630.2px;font-size:12.4px;color:#333">14</div><div class="t" style="left:38px;top:630.4px;font-size:12px;letter-spacing:0.3px;color:#111;width:56px;overflow:hidden">24/01/202</div><div class="t" style="left:97px;top:630.4px;font-size:12px;color:#111">Male</div><div class="t" style="right:1709.5px;top:630.4px;font-size:12px;letter-spacing:0.3px;color:#111">57</div><div class="t" style="left:216px;top:630.4px;font-size:12px;color:#111">Yes</div><div class="t" style="left:275.5px;top:630.4px;font-size:12px;color:#111">Yes</div><div class="t" style="left:10px;width:25px;text-align:center;top:648.1px;font-size:12.4px;color:#333">15</div><div class="t" style="left:38px;top:648.3px;font-size:12px;letter-spacing:0.3px;color:#111;width:56px;overflow:hidden">24/01/202</div><div class="t" style="left:97px;top:648.3px;font-size:12px;color:#111">Female</div><div class="t" style="right:1709.5px;top:648.3px;font-size:12px;letter-spacing:0.3px;color:#111">50</div><div class="t" style="left:216px;top:648.3px;font-size:12px;color:#111">Yes</div><div class="t" style="left:275.5px;top:648.3px;font-size:12px;color:#111">Yes</div><div class="t" style="left:10px;width:25px;text-align:center;top:665.9px;font-size:12.4px;color:#333">16</div><div class="t" style="left:38px;top:666.1px;font-size:12px;letter-spacing:0.3px;color:#111;width:56px;overflow:hidden">24/01/202</div><div class="t" style="left:97px;top:666.1px;font-size:12px;color:#111">Female</div><div class="t" style="right:1709.5px;top:666.1px;font-size:12px;letter-spacing:0.3px;color:#111">54</div><div class="t" style="left:216px;top:666.1px;font-size:12px;color:#111">Yes</div><div class="t" style="left:275.5px;top:666.1px;font-size:12px;color:#111">Yes</div><div class="t" style="left:10px;width:25px;text-align:center;top:683.7px;font-size:12.4px;color:#333">17</div><div class="t" style="left:38px;top:683.9px;font-size:12px;letter-spacing:0.3px;color:#111;width:56px;overflow:hidden">24/01/202</div><div class="t" style="left:97px;top:683.9px;font-size:12px;color:#111">Male</div><div class="t" style="right:1709.5px;top:683.9px;font-size:12px;letter-spacing:0.3px;color:#111">44</div><div class="t" style="left:216px;top:683.9px;font-size:12px;color:#111">Yes</div><div class="t" style="left:275.5px;top:683.9px;font-size:12px;color:#111">Yes</div><div class="t" style="left:10px;width:25px;text-align:center;top:701.6px;font-size:12.4px;color:#333">18</div><div class="t" style="left:38px;top:701.8px;font-size:12px;letter-spacing:0.3px;color:#111;width:56px;overflow:hidden">24/01/202</div><div class="t" style="left:97px;top:701.8px;font-size:12px;color:#111">Female</div><div class="t" style="right:1709.5px;top:701.8px;font-size:12px;letter-spacing:0.3px;color:#111">35</div><div class="t" style="left:216px;top:701.8px;font-size:12px;color:#111">Yes</div><div class="t" style="left:275.5px;top:701.8px;font-size:12px;color:#111">Yes</div><div class="t" style="left:10px;width:25px;text-align:center;top:719.4px;font-size:12.4px;color:#333">19</div><div class="t" style="left:38px;top:719.6px;font-size:12px;letter-spacing:0.3px;color:#111;width:56px;overflow:hidden">25/01/202</div><div class="t" style="left:97px;top:719.6px;font-size:12px;color:#111">Female</div><div class="t" style="right:1709.5px;top:719.6px;font-size:12px;letter-spacing:0.3px;color:#111">32</div><div class="t" style="left:216px;top:719.6px;font-size:12px;color:#111">Yes</div><div class="t" style="left:275.5px;top:719.6px;font-size:12px;color:#111">Yes</div><div class="t" style="left:10px;width:25px;text-align:center;top:737.2px;font-size:12.4px;color:#333">20</div><div class="t" style="left:38px;top:737.4px;font-size:12px;letter-spacing:0.3px;color:#111;width:56px;overflow:hidden">25/01/202</div><div class="t" style="left:97px;top:737.4px;font-size:12px;color:#111">Female</div><div class="t" style="right:1709.5px;top:737.4px;font-size:12px;letter-spacing:0.3px;color:#111">46</div><div class="t" style="left:216px;top:737.4px;font-size:12px;color:#111">Yes</div><div class="t" style="left:275.5px;top:737.4px;font-size:12px;color:#111">Yes</div><div class="t" style="left:10px;width:25px;text-align:center;top:755.0px;font-size:12.4px;color:#333">21</div><div class="t" style="left:38px;top:755.2px;font-size:12px;letter-spacing:0.3px;color:#111;width:56px;overflow:hidden">25/01/202</div><div class="t" style="left:97px;top:755.2px;font-size:12px;color:#111">Female</div><div class="t" style="right:1709.5px;top:755.2px;font-size:12px;letter-spacing:0.3px;color:#111">6</div><div class="t" style="left:216px;top:755.2px;font-size:12px;color:#111">No</div><div class="t" style="left:275.5px;top:755.2px;font-size:12px;color:#111">Yes</div><div class="t" style="left:10px;width:25px;text-align:center;top:772.9px;font-size:12.4px;color:#333">22</div><div class="t" style="left:38px;top:773.1px;font-size:12px;letter-spacing:0.3px;color:#111;width:56px;overflow:hidden">25/01/202</div><div class="t" style="left:97px;top:773.1px;font-size:12px;color:#111">Male</div><div class="t" style="right:1709.5px;top:773.1px;font-size:12px;letter-spacing:0.3px;color:#111">49</div><div class="t" style="left:216px;top:773.1px;font-size:12px;color:#111">No</div><div class="t" style="left:275.5px;top:773.1px;font-size:12px;color:#111">Yes</div><div class="t" style="left:10px;width:25px;text-align:center;top:790.7px;font-size:12.4px;color:#333">23</div><div class="t" style="left:38px;top:790.9px;font-size:12px;letter-spacing:0.3px;color:#111;width:56px;overflow:hidden">25/01/202</div><div class="t" style="left:97px;top:790.9px;font-size:12px;color:#111">Female</div><div class="t" style="right:1709.5px;top:790.9px;font-size:12px;letter-spacing:0.3px;color:#111">62</div><div class="t" style="left:216px;top:790.9px;font-size:12px;color:#111">No</div><div class="t" style="left:275.5px;top:790.9px;font-size:12px;color:#111">Yes</div><div class="t" style="left:10px;width:25px;text-align:center;top:808.5px;font-size:12.4px;color:#333">24</div><div class="t" style="left:38px;top:808.7px;font-size:12px;letter-spacing:0.3px;color:#111;width:56px;overflow:hidden">25/01/202</div><div class="t" style="left:97px;top:808.7px;font-size:12px;color:#111">Male</div><div class="t" style="right:1709.5px;top:808.7px;font-size:12px;letter-spacing:0.3px;color:#111">40</div><div class="t" style="left:216px;top:808.7px;font-size:12px;color:#111">Yes</div><div class="t" style="left:275.5px;top:808.7px;font-size:12px;color:#111">Yes</div><div class="t" style="left:10px;width:25px;text-align:center;top:826.4px;font-size:12.4px;color:#333">25</div><div class="t" style="left:38px;top:826.6px;font-size:12px;letter-spacing:0.3px;color:#111;width:56px;overflow:hidden">25/01/202</div><div class="t" style="left:97px;top:826.6px;font-size:12px;color:#111">Female</div><div class="t" style="right:1709.5px;top:826.6px;font-size:12px;letter-spacing:0.3px;color:#111">38</div><div class="t" style="left:216px;top:826.6px;font-size:12px;color:#111">Yes</div><div class="t" style="left:275.5px;top:826.6px;font-size:12px;color:#111">Yes</div><div class="t" style="left:10px;width:25px;text-align:center;top:844.2px;font-size:12.4px;color:#333">26</div><div class="t" style="left:38px;top:844.4px;font-size:12px;letter-spacing:0.3px;color:#111;width:56px;overflow:hidden">25/01/202</div><div class="t" style="left:97px;top:844.4px;font-size:12px;color:#111">Female</div><div class="t" style="right:1709.5px;top:844.4px;font-size:12px;letter-spacing:0.3px;color:#111">81</div><div class="t" style="left:216px;top:844.4px;font-size:12px;color:#111">Yes</div><div class="t" style="left:275.5px;top:844.4px;font-size:12px;color:#111">Yes</div>
<div style="left:34px;top:394px;width:298.6px;height:20px;border:2px solid #1f6b41"></div>
<div style="left:330px;top:410px;width:5px;height:5px;background:#1f6b41;border:1px solid #fff"></div>
<div style="left:336px;top:416px;width:18px;height:19px;background:#fff;border:1px solid #a9b8ae"></div>
<svg style="left:339px;top:419px;" width="13" height="13" viewBox="0 0 13 13"><path d="M1 1l2 3" stroke="#f2a93b" stroke-width="1.5"/><g fill="none" stroke="#666" stroke-width="0.8"><rect x="2.5" y="2.5" width="10" height="10"/></g><rect x="4" y="5" width="7" height="1.6" fill="#d35230"/><rect x="4" y="8" width="5" height="1.6" fill="#3d79c0"/><rect x="4" y="11" width="6" height="1.2" fill="#2ca089"/></svg>
<svg style="left:285px;top:398px;" width="14" height="14" viewBox="0 0 14 14"><path d="M5 1h4v4h4v4H9v4H5V9H1V5h4z" fill="#fff" stroke="#111" stroke-width="1"/></svg>
<div style="left:1415px;top:377px;width:17px;height:479px;background:#e6e6e6;"></div>
<div style="left:1417px;top:380px;width:14px;height:13px;background:#fff;border:1px solid #d6d6d6"></div>
<svg style="left:1420px;top:384px;" width="8" height="5" viewBox="0 0 8 5"><path d="M0 4.5L4 0.5 8 4.5z" fill="#666"/></svg>
<div style="left:1417px;top:394px;width:14px;height:46px;background:#fff;border:1px solid #d6d6d6"></div>
<div style="left:1417px;top:841px;width:14px;height:15px;background:#fff;border:1px solid #d6d6d6"></div>
<svg style="left:1420px;top:846px;" width="8" height="5" viewBox="0 0 8 5"><path d="M0 0.5L4 4.5 8 0.5z" fill="#666"/></svg>
<svg style="left:1408px;top:512px;" width="26" height="34" viewBox="0 0 26 34"><circle cx="17" cy="17" r="16" fill="#0f62d9"/><g fill="#fff"><path d="M8 12l5-3 5 3-5 3z"/><path d="M18 12l5-3 5 3-5 3z"/><path d="M8 18l5-3 5 3-5 3z"/><path d="M18 18l5-3 5 3-5 3z"/><path d="M13 23l5-3 5 3-5 3z"/></g></svg>
<div style="left:10px;top:856px;width:1422px;height:22px;background:#e6e6e6;"></div>
<div style="left:10px;top:855.5px;width:1405px;height:1px;background:#c8c8c8;"></div>
<svg style="left:30px;top:862px;" width="6" height="8" viewBox="0 0 6 8"><path d="M5 0.5v7L0.5 4z" fill="#c8c8c8"/></svg>
<svg style="left:51px;top:862px;" width="6" height="8" viewBox="0 0 6 8"><path d="M1 0.5v7L5.5 4z" fill="#c8c8c8"/></svg>
<div style="left:87px;top:856px;width:48px;height:19px;background:#fff;border-left:1px solid #d0d0d0;border-right:1px solid #d0d0d0;border-bottom:2px solid #1f6b41"></div>
<div class="t" style="left:96.0px;top:858.0px;font-size:12.2px;color:#217346;font-weight:bold">Blink</div>
<svg style="left:159px;top:859px;" width="16" height="16" viewBox="0 0 16 16"><circle cx="8" cy="8" r="7" fill="none" stroke="#777" stroke-width="1.1"/><path d="M8 4v8M4 8h8" stroke="#777" stroke-width="1.3"/></svg>
<svg style="left:861px;top:860px;" width="4" height="14" viewBox="0 0 4 14"><g fill="#a0a0a0"><circle cx="2" cy="2" r="0.9"/><circle cx="2" cy="7" r="0.9"/><circle cx="2" cy="12" r="0.9"/></g></svg>
<div style="left:876px;top:859px;width:14px;height:15px;background:#fff;border:1px solid #d6d6d6"></div>
<svg style="left:880px;top:863px;" width="5" height="8" viewBox="0 0 5 8"><path d="M4.5 0v8L0.5 4z" fill="#666"/></svg>
<div style="left:890px;top:859px;width:488px;height:15px;background:#fff;border:1px solid #d6d6d6"></div>
<div style="left:1401px;top:859px;width:14px;height:15px;background:#fff;border:1px solid #d6d6d6"></div>
<svg style="left:1406px;top:863px;" width="5" height="8" viewBox="0 0 5 8"><path d="M0.5 0v8L4.5 4z" fill="#666"/></svg>
<div style="left:10px;top:878px;width:1422px;height:8px;background:#f3f3f3;"></div>
<div style="left:10px;top:877.5px;width:1422px;height:1px;background:#d8d8d8;"></div>
<div style="left:1145px;top:878px;width:35px;height:8px;background:#cfcfcf;"></div>
<div style="left:8px;top:886px;width:1426px;height:44px;background:#292627;"></div>
<svg style="left:28px;top:897px;" width="20" height="20" viewBox="0 0 20 20"><defs><radialGradient id="sun" cx="0.35" cy="0.3" r="0.8"><stop offset="0" stop-color="#ffc12e"/><stop offset="1" stop-color="#f7651c"/></radialGradient></defs><circle cx="10" cy="10" r="9.2" fill="url(#sun)"/></svg>
<div class="t" style="left:56.0px;top:896.3px;font-size:10px;color:#f2f2f2;">17°C</div>
<div class="t" style="left:56.0px;top:910.9px;font-size:10.5px;color:#e0e0e0;">Sunny</div>
<svg style="left:334px;top:897px;" width="23" height="23" viewBox="0 0 23 23"><defs><linearGradient id="w11" x1="0" y1="0" x2="1" y2="1"><stop offset="0" stop-color="#86e0ff"/><stop offset="1" stop-color="#1a9fe8"/></linearGradient></defs><g fill="url(#w11)"><rect x="0.5" y="0.5" width="10.5" height="10.5"/><rect x="12" y="0.5" width="10.5" height="10.5"/><rect x="0.5" y="12" width="10.5" height="10.5"/><rect x="12" y="12" width="10.5" height="10.5"/></g></svg>
<div style="left:370px;top:894px;width:202px;height:28px;background:#f0f0f0;border-radius:14px"></div>
<svg style="left:379px;top:902px;" width="16" height="16" viewBox="0 0 16 16"><circle cx="6.5" cy="6.5" r="5" fill="none" stroke="#222" stroke-width="1.6"/><path d="M10 10l4.5 4.5" stroke="#222" stroke-width="1.8"/></svg>
<div class="t" style="left:403.3px;top:902.5px;font-size:12px;color:#5a5a5a;">Search</div>
<svg style="left:547px;top:900px;" width="21" height="19" viewBox="0 0 21 19"><path d="M10 1.5a8 8 0 1 1 -6 13.5l-2.5 2.5 0.5-4A8 8 0 0 1 10 1.5z" fill="#fff" stroke="#3b8fd9" stroke-width="1.3"/><path d="M7.5 4.5v9l4-2.5-2.2-1.8" fill="none" stroke="#1a6fd0" stroke-width="2"/></svg>
<svg style="left:584px;top:897px;" width="24" height="21" viewBox="0 0 24 21"><rect x="6" y="0" width="17" height="14" fill="#f0f0f0" rx="1"/><rect x="1" y="6" width="17" height="14" fill="#8a8a8a" rx="1" opacity="0.95"/></svg>
<svg style="left:624px;top:896px;" width="24" height="24" viewBox="0 0 24 24"><circle cx="12" cy="11" r="10.5" fill="#6264a7"/><path d="M3 18l-2 5 5-2z" fill="#6264a7"/><rect x="6" y="7" width="9" height="8" rx="1.5" fill="#fff"/><path d="M15 10l4-2.5v7L15 12z" fill="#fff"/></svg>
<svg style="left:665px;top:895px;" width="25" height="25" viewBox="0 0 25 25"><circle cx="12.5" cy="13" r="10.5" fill="#ff7139"/><circle cx="12.5" cy="13" r="7" fill="#9059ff"/><circle cx="12" cy="13" r="3.5" fill="#592acb"/><path d="M4 8c2-5 8-7 12-5-1 2-1 4 2 6 3 3 2 9-1 11" fill="#ffbd4f" opacity="0.9"/></svg>
<div style="left:674.5px;top:923px;width:6px;height:2.5px;background:#8e8e8e;border-radius:2px"></div>
<svg style="left:706px;top:897px;" width="24" height="22" viewBox="0 0 24 22"><path d="M0 2h9l2 2h12v16H0z" fill="#ffc83d"/><rect x="0" y="6" width="23" height="14" fill="#ffd75e"/><rect x="6" y="14" width="12" height="6" fill="#2b7cd3"/></svg>
<div style="left:715px;top:923px;width:6px;height:2.5px;background:#8e8e8e;border-radius:2px"></div>
<svg style="left:747px;top:897px;" width="24" height="24" viewBox="0 0 24 24"><defs><linearGradient id="ed" x1="0" y1="0" x2="1" y2="1"><stop offset="0" stop-color="#35c1f1"/><stop offset="0.6" stop-color="#1b9de2"/><stop offset="1" stop-color="#0c59a4"/></linearGradient></defs><circle cx="12" cy="12" r="11" fill="url(#ed)"/><path d="M5 13c1-6 12-8 15-2 1 3-2 4-5 4-4 0-6 3-3 6-6 0-8-4-7-8z" fill="#2ed47a" opacity="0.85"/><circle cx="12.5" cy="14" r="4" fill="#0c59a4"/></svg>
<div style="left:755.5px;top:923px;width:6px;height:2.5px;background:#8e8e8e;border-radius:2px"></div>
<svg style="left:788px;top:897px;" width="24" height="24" viewBox="0 0 24 24"><circle cx="12" cy="12" r="11.5" fill="#1ed760"/><g fill="none" stroke="#111" stroke-linecap="round"><path d="M5.5 8.5c4-1.3 9-1 13 1" stroke-width="2.2"/><path d="M6.5 12.5c3.5-1 7.5-0.7 10.5 1" stroke-width="1.8"/><path d="M7 16c3-0.8 6-0.5 8.5 0.8" stroke-width="1.5"/></g></svg>
<div style="left:796.5px;top:923px;width:6px;height:2.5px;background:#8e8e8e;border-radius:2px"></div>
<svg style="left:829px;top:897px;" width="24" height="24" viewBox="0 0 24 24"><circle cx="12" cy="12" r="11.5" fill="#78a7d8"/><text x="12" y="18" text-anchor="middle" font-family="Liberation Serif" font-size="16" fill="#fff">R</text></svg>
<div style="left:837.5px;top:923px;width:6px;height:2.5px;background:#8e8e8e;border-radius:2px"></div>
<div style="left:863px;top:889px;width:35px;height:38px;background:#34323a;border-radius:4px"></div>
<svg style="left:869px;top:896px;" width="24" height="23" viewBox="0 0 24 23"><rect x="9" y="1" width="14" height="21" fill="#fff" rx="1"/><g fill="#1d6f42"><rect x="10.5" y="3" width="11" height="3"/><rect x="10.5" y="7.5" width="11" height="3"/><rect x="10.5" y="12" width="11" height="3"/><rect x="10.5" y="16.5" width="11" height="3"/></g><rect x="0" y="3" width="13" height="17" fill="#1d6f42"/><text x="6.5" y="15.5" text-anchor="middle" font-family="Liberation Sans" font-weight="bold" font-size="10" fill="#fff">X</text></svg>
<div style="left:874px;top:922.5px;width:15px;height:3px;background:#5ab2f0;border-radius:2px"></div>
<svg style="left:910px;top:896px;" width="24" height="23" viewBox="0 0 24 23"><rect x="9" y="1" width="14" height="21" fill="#ca64ea" rx="1"/><rect x="15" y="4" width="8" height="15" fill="#9332bf"/><rect x="0" y="4" width="14" height="15" fill="#7719aa"/><text x="7" y="15.5" text-anchor="middle" font-family="Liberation Sans" font-weight="bold" font-size="10" fill="#fff">N</text></svg>
<div style="left:919px;top:923px;width:6px;height:2.5px;background:#8e8e8e;border-radius:2px"></div>
<svg style="left:952px;top:897px;" width="24" height="22" viewBox="0 0 24 22"><path d="M3 4c6-3 14-4 20-2l-2 17c-6 1-13 1-19 0z" fill="#f5e200"/><text x="12.5" y="15" text-anchor="middle" font-family="Liberation Sans" font-weight="bold" font-size="8" fill="#222">PDF</text></svg>
<div style="left:960px;top:923px;width:6px;height:2.5px;background:#8e8e8e;border-radius:2px"></div>
<svg style="left:993px;top:896px;" width="22" height="24" viewBox="0 0 22 24"><rect x="7" y="1" width="14" height="21" fill="#fff" rx="1"/><g fill="#2b579a"><rect x="9" y="4" width="10" height="2"/><rect x="9" y="8" width="10" height="2"/><rect x="9" y="12" width="10" height="2"/><rect x="9" y="16" width="10" height="2"/></g><rect x="0" y="4" width="12" height="15" fill="#2b579a"/><text x="6" y="15" text-anchor="middle" font-family="Liberation Sans" font-weight="bold" font-size="9" fill="#fff">W</text></svg>
<div style="left:1001px;top:923px;width:6px;height:2.5px;background:#8e8e8e;border-radius:2px"></div>
<svg style="left:1034px;top:896px;" width="24" height="24" viewBox="0 0 24 24"><rect x="1" y="1" width="22" height="22" rx="3" fill="#d7141a"/><path d="M6 18c3-5 5-9 6-13 1 4 4 9 7 11-4-1-9-1-13 2z" fill="none" stroke="#fff" stroke-width="1.6"/></svg>
<div style="left:1042px;top:923px;width:6px;height:2.5px;background:#8e8e8e;border-radius:2px"></div>
<svg style="left:1074px;top:896px;" width="24" height="24" viewBox="0 0 24 24"><circle cx="12" cy="12" r="11.5" fill="#1a5de5"/><text x="12" y="14.5" text-anchor="middle" font-family="Liberation Sans" font-size="6.5" fill="#fff">zoom</text></svg>
<div style="left:1083px;top:923px;width:6px;height:2.5px;background:#8e8e8e;border-radius:2px"></div>
<svg style="left:1126px;top:905px;" width="12" height="7" viewBox="0 0 12 7"><path d="M1 6l5-5 5 5" fill="none" stroke="#eee" stroke-width="1.4"/></svg>
<svg style="left:1153px;top:901px;" width="18" height="14" viewBox="0 0 18 14"><path d="M4 12h10a3.5 3.5 0 0 0 0-7 5 5 0 0 0-9.5 1A3 3 0 0 0 4 12z" fill="#9c9c9c"/><path d="M2 1l14 13" stroke="#262428" stroke-width="2.5"/><path d="M2 1l14 13" stroke="#bbb" stroke-width="1"/></svg>
<svg style="left:1183px;top:900px;" width="16" height="17" viewBox="0 0 16 17"><rect x="1" y="6" width="14" height="10" rx="1.5" fill="#d9232e"/><circle cx="5" cy="3.5" r="2.5" fill="#fff"/><circle cx="11" cy="3.5" r="2.5" fill="#fff"/><text x="8" y="14" text-anchor="middle" font-size="5" font-family="Liberation Sans" fill="#fff">43</text></svg>
<svg style="left:1214px;top:899px;" width="14" height="17" viewBox="0 0 14 17"><rect x="4" y="1" width="6" height="10" rx="3" fill="none" stroke="#6fc3df" stroke-width="1.4"/><path d="M1.5 8a5.5 5.5 0 0 0 11 0M7 13.5v3" fill="none" stroke="#6fc3df" stroke-width="1.4"/></svg>
<div class="t" style="left:1245.6px;top:895.9px;font-size:10.2px;color:#f0f0f0;">ENG</div>
<div class="t" style="left:1249.0px;top:910.9px;font-size:10.2px;color:#f0f0f0;">US</div>
<svg style="left:1282px;top:901px;" width="17" height="13" viewBox="0 0 17 13"><g fill="none" stroke="#aaa" stroke-width="1.3"><path d="M1 5a10 10 0 0 1 15 0"/><path d="M3.5 7.5a6.5 6.5 0 0 1 10 0"/></g><path d="M6 10a3.5 3.5 0 0 1 5 0L8.5 12.5z" fill="#eee"/></svg>
<svg style="left:1304px;top:901px;" width="17" height="13" viewBox="0 0 17 13"><path d="M1 4.5h3l4-3.5v12l-4-3.5H1z" fill="none" stroke="#eee" stroke-width="1.2"/><path d="M10.5 4a3.5 3.5 0 0 1 0 6M12.5 2a6 6 0 0 1 0 10" fill="none" stroke="#ccc" stroke-width="1.1"/></svg>
<svg style="left:1327px;top:899px;" width="17" height="15" viewBox="0 0 17 15"><rect x="1.5" y="5" width="13" height="8" rx="1" fill="#ddd" stroke="#eee"/><rect x="14.5" y="7.5" width="2" height="3" fill="#eee"/><path d="M5 0l-2 5h3l-2 4" fill="none" stroke="#fff" stroke-width="1.2"/></svg>
<div class="t" style="right:504.0px;top:894.5px;font-size:11.3px;color:#f0f0f0;">5:02 PM</div>
<div class="t" style="right:504.0px;top:909.0px;font-size:11.3px;color:#f0f0f0;">10/10/2023</div>
<svg style="left:1449px;top:399px" width="464" height="261" viewBox="1449 399 464 261"><defs><linearGradient id="lw" x1="0" y1="0" x2="1" y2="0"><stop offset="0" stop-color="#e7e7e6"/><stop offset="0.6" stop-color="#e3e1de"/><stop offset="1" stop-color="#d2cfca"/></linearGradient><linearGradient id="ceil" x1="0" y1="0" x2="1" y2="0"><stop offset="0" stop-color="#e9e8e6"/><stop offset="1" stop-color="#c2beb8"/></linearGradient><linearGradient id="rw" x1="0" y1="0" x2="1" y2="0"><stop offset="0" stop-color="#cdc9c3"/><stop offset="1" stop-color="#c4c0ba"/></linearGradient><linearGradient id="lamp" x1="0" y1="0" x2="1" y2="1"><stop offset="0" stop-color="#d8d8d8"/><stop offset="0.5" stop-color="#9d9d9d"/><stop offset="1" stop-color="#cfcfcf"/></linearGradient><radialGradient id="skin" cx="0.5" cy="0.45" r="0.6"><stop offset="0" stop-color="#e2b39c"/><stop offset="1" stop-color="#c98f76"/></radialGradient><filter id="bl" x="-5%" y="-5%" width="110%" height="110%"><feGaussianBlur stdDeviation="0.9"/></filter></defs><g filter="url(#bl)"><polygon points="1449,399 1913,399 1913,660 1449,660" fill="url(#lw)" /><polygon points="1755,449 1855,399 1913,399 1913,660 1755,660" fill="url(#rw)" /><polygon points="1570,399 1855,399 1755,449" fill="url(#ceil)" /><path d="M1580 399L1755 449L1855 399" fill="none" stroke="#f0efed" stroke-width="1.2"/><polygon points="1778,486 1851,461 1859,660 1782,660" fill="#e2e0dc" /><polygon points="1787,493 1833,484 1840,660 1790,660" fill="#e9e7e4" /><path d="M1787 493L1833 484L1840 660" fill="none" stroke="#d6d3ce" stroke-width="1"/><rect x="1831" y="587" width="15" height="3" rx="1.5" fill="#6d6b69"/><circle cx="1848" cy="588" r="2.5" fill="#6d6b69"/><circle cx="1848" cy="600" r="2.3" fill="#767472"/><polygon points="1862,526 1905,518 1913,522 1913,551 1862,571" fill="url(#lamp)" /><polygon points="1895,518 1913,512 1913,530" fill="#e8e8e8" /><path d="M1862 571L1913 551" stroke="#7d7d7d" stroke-width="2"/><path d="M1862 527v44" stroke="#8a8a8a" stroke-width="1.5"/><polygon points="1478,445 1662,472 1662,660 1457,660" fill="#f1f1f0" /><polygon points="1449,470 1478,445 1457,660 1449,660" fill="#eeeeee" /><rect x="1475.0" y="462.7" width="4.0" height="26.3" fill="#7a7f84"/><rect x="1479.0" y="458.7" width="2.0" height="30.7" fill="#b3c6d0"/><rect x="1481.0" y="460.3" width="2.5" height="29.3" fill="#e9e4d8"/><rect x="1483.5" y="458.9" width="3.0" height="31.0" fill="#dfe5e8"/><rect x="1486.5" y="459.3" width="4.5" height="30.9" fill="#3a3838"/><rect x="1491.0" y="459.6" width="4.5" height="31.0" fill="#efefea"/><rect x="1495.5" y="464.5" width="2.5" height="26.6" fill="#cfd8dc"/><rect x="1498.0" y="462.8" width="2.0" height="28.5" fill="#7a7f84"/><rect x="1500.0" y="465.0" width="2.0" height="26.6" fill="#e9e4d8"/><rect x="1502.0" y="461.7" width="3.0" height="30.1" fill="#c9826a"/><rect x="1505.0" y="463.4" width="2.5" height="28.7" fill="#b3c6d0"/><rect x="1507.5" y="461.2" width="3.0" height="31.1" fill="#efefea"/><rect x="1510.5" y="462.8" width="3.0" height="29.8" fill="#b3c6d0"/><rect x="1513.5" y="464.1" width="2.5" height="28.9" fill="#e4ddd0"/><rect x="1516.0" y="463.9" width="3.0" height="29.3" fill="#b3c6d0"/><rect x="1519.0" y="465.6" width="4.5" height="27.9" fill="#b07070"/><rect x="1523.5" y="463.9" width="5.0" height="30.1" fill="#c6d1d6"/><rect x="1528.5" y="466.0" width="3.0" height="28.5" fill="#c6d1d6"/><rect x="1531.5" y="465.6" width="2.5" height="29.2" fill="#d6bf85"/><rect x="1534.0" y="467.3" width="5.0" height="27.7" fill="#b07070"/><rect x="1539.0" y="466.4" width="3.5" height="29.2" fill="#3a3838"/><rect x="1542.5" y="466.2" width="2.5" height="29.7" fill="#6f93ad"/><rect x="1545.0" y="464.6" width="4.0" height="31.5" fill="#4a5058"/><rect x="1549.0" y="464.4" width="4.5" height="32.2" fill="#3a3838"/><rect x="1553.5" y="466.3" width="4.0" height="30.8" fill="#f0ece2"/><rect x="1557.5" y="467.8" width="5.0" height="29.6" fill="#b07070"/><rect x="1562.5" y="469.6" width="2.5" height="28.4" fill="#6a5a52"/><rect x="1565.0" y="469.1" width="5.0" height="29.2" fill="#3a3838"/><rect x="1570.0" y="469.6" width="2.0" height="29.1" fill="#e2cc7a"/><rect x="1572.0" y="467.6" width="5.0" height="31.4" fill="#7a7f84"/><rect x="1577.0" y="466.7" width="4.0" height="32.8" fill="#b07070"/><rect x="1581.0" y="467.8" width="4.0" height="32.1" fill="#9a4a50"/><rect x="1590.0" y="468.3" width="5.0" height="36.7" fill="#e2cc7a"/><rect x="1595.0" y="472.4" width="3.0" height="33.2" fill="#7a7f84"/><rect x="1598.0" y="473.8" width="4.5" height="32.2" fill="#4a5058"/><rect x="1602.5" y="470.7" width="2.5" height="35.9" fill="#7a7f84"/><rect x="1605.0" y="474.7" width="3.5" height="32.2" fill="#dfe5e8"/><rect x="1608.5" y="474.3" width="3.5" height="33.0" fill="#f0ece2"/><rect x="1612.0" y="476.1" width="4.5" height="31.7" fill="#c9826a"/><rect x="1616.5" y="472.9" width="2.5" height="35.5" fill="#c6d1d6"/><rect x="1619.0" y="472.4" width="3.0" height="36.2" fill="#efefea"/><rect x="1622.0" y="474.1" width="3.0" height="34.9" fill="#f4f2ec"/><rect x="1625.0" y="475.3" width="3.0" height="34.0" fill="#f0ece2"/><rect x="1628.0" y="478.5" width="4.0" height="31.3" fill="#d6bf85"/><rect x="1637.0" y="477.3" width="2.0" height="34.7" fill="#b3c6d0"/><rect x="1639.0" y="477.3" width="4.5" height="35.0" fill="#7a7f84"/><rect x="1643.5" y="478.3" width="2.5" height="34.6" fill="#7a7f84"/><rect x="1646.0" y="477.1" width="2.0" height="36.0" fill="#d7d2c5"/><rect x="1648.0" y="477.2" width="5.0" height="36.2" fill="#8a4a52"/><rect x="1653.0" y="477.6" width="2.0" height="36.5" fill="#efefea"/><rect x="1655.0" y="480.0" width="3.0" height="34.3" fill="#f0ece2"/><rect x="1658.0" y="478.1" width="2.0" height="36.6" fill="#d7d2c5"/><rect x="1473.0" y="501.7" width="4.5" height="31.3" fill="#6a5a52"/><rect x="1477.5" y="504.3" width="4.0" height="29.0" fill="#4a5058"/><rect x="1481.5" y="502.2" width="2.5" height="31.4" fill="#4a5058"/><rect x="1484.0" y="504.2" width="5.0" height="29.6" fill="#e2cc7a"/><rect x="1489.0" y="502.9" width="2.5" height="31.3" fill="#8a4a52"/><rect x="1491.5" y="504.8" width="3.5" height="29.6" fill="#6f93ad"/><rect x="1495.0" y="503.7" width="2.0" height="31.0" fill="#d6bf85"/><rect x="1497.0" y="503.5" width="4.0" height="31.3" fill="#b3c6d0"/><rect x="1501.0" y="506.9" width="2.0" height="28.2" fill="#e2cc7a"/><rect x="1503.0" y="506.7" width="2.5" height="28.5" fill="#6a5a52"/><rect x="1505.5" y="508.0" width="4.0" height="27.5" fill="#f0ece2"/><rect x="1509.5" y="506.4" width="3.0" height="29.3" fill="#d6bf85"/><rect x="1512.5" y="507.1" width="4.0" height="28.8" fill="#e4ddd0"/><rect x="1516.5" y="508.3" width="3.0" height="28.0" fill="#7a7f84"/><rect x="1519.5" y="505.5" width="3.0" height="31.0" fill="#4a5058"/><rect x="1522.5" y="508.4" width="4.0" height="28.3" fill="#f4f2ec"/><rect x="1526.5" y="507.4" width="3.5" height="29.6" fill="#d7d2c5"/><rect x="1530.0" y="507.5" width="4.0" height="29.8" fill="#f0ece2"/><rect x="1534.0" y="506.0" width="4.0" height="31.6" fill="#9a4a50"/><rect x="1538.0" y="508.2" width="3.0" height="29.6" fill="#8a4a52"/><rect x="1541.0" y="508.5" width="3.0" height="29.6" fill="#e4ddd0"/><rect x="1544.0" y="508.7" width="2.0" height="29.6" fill="#cfd8dc"/><rect x="1546.0" y="510.5" width="4.0" height="28.0" fill="#3a3838"/><rect x="1550.0" y="511.3" width="2.5" height="27.5" fill="#d7d2c5"/><rect x="1552.5" y="511.4" width="5.0" height="27.6" fill="#dfe5e8"/><rect x="1557.5" y="507.8" width="4.0" height="31.6" fill="#7a7f84"/><rect x="1561.5" y="509.6" width="5.0" height="30.0" fill="#3a3838"/><rect x="1566.5" y="508.8" width="3.0" height="31.1" fill="#c9826a"/><rect x="1569.5" y="509.0" width="2.0" height="31.2" fill="#b07070"/><rect x="1571.5" y="511.4" width="3.0" height="28.9" fill="#e4ddd0"/><rect x="1574.5" y="511.9" width="5.0" height="28.7" fill="#f0ece2"/><rect x="1579.5" y="511.7" width="3.0" height="29.3" fill="#c9826a"/><rect x="1588.0" y="510.1" width="2.0" height="32.9" fill="#cfd8dc"/><rect x="1590.0" y="512.8" width="2.5" height="30.4" fill="#c9826a"/><rect x="1592.5" y="515.4" width="4.5" height="28.1" fill="#d7d2c5"/><rect x="1597.0" y="511.0" width="3.0" height="32.9" fill="#d7d2c5"/><rect x="1600.0" y="513.7" width="3.5" height="30.5" fill="#efefea"/><rect x="1603.5" y="512.8" width="4.0" height="31.7" fill="#dfe5e8"/><rect x="1607.5" y="512.3" width="3.0" height="32.7" fill="#f0ece2"/><rect x="1610.5" y="515.6" width="5.0" height="29.7" fill="#d6bf85"/><rect x="1615.5" y="516.9" width="4.5" height="28.9" fill="#d6bf85"/><rect x="1620.0" y="515.9" width="3.0" height="30.3" fill="#d6bf85"/><rect x="1623.0" y="517.9" width="2.0" height="28.6" fill="#6f93ad"/><rect x="1625.0" y="517.6" width="2.0" height="29.1" fill="#c9826a"/><rect x="1627.0" y="514.6" width="3.0" height="32.3" fill="#e4ddd0"/><rect x="1636.0" y="517.8" width="2.5" height="30.2" fill="#8a4a52"/><rect x="1638.5" y="519.2" width="5.0" height="29.0" fill="#9a4a50"/><rect x="1643.5" y="517.2" width="2.0" height="31.4" fill="#6a5a52"/><rect x="1645.5" y="520.0" width="2.0" height="28.7" fill="#d6bf85"/><rect x="1647.5" y="519.2" width="5.0" height="29.7" fill="#3a3838"/><rect x="1652.5" y="518.7" width="5.0" height="30.7" fill="#d6bf85"/><rect x="1657.5" y="521.2" width="3.0" height="28.6" fill="#b07070"/><rect x="1469.0" y="547.5" width="5.0" height="30.5" fill="#c6d1d6"/><rect x="1474.0" y="549.8" width="3.5" height="28.4" fill="#d7d2c5"/><rect x="1477.5" y="546.1" width="5.0" height="32.4" fill="#9a4a50"/><rect x="1482.5" y="547.8" width="4.5" height="30.9" fill="#3a3838"/><rect x="1487.0" y="548.0" width="3.0" height="31.0" fill="#d7d2c5"/><rect x="1490.0" y="549.9" width="3.5" height="29.3" fill="#c9826a"/><rect x="1493.5" y="546.8" width="4.0" height="32.5" fill="#c9826a"/><rect x="1497.5" y="547.4" width="5.0" height="32.2" fill="#9a4a50"/><rect x="1502.5" y="550.9" width="4.5" height="28.9" fill="#6f93ad"/><rect x="1507.0" y="547.5" width="3.0" height="32.5" fill="#dfe5e8"/><rect x="1510.0" y="548.6" width="4.5" height="31.7" fill="#d7d2c5"/><rect x="1514.5" y="548.7" width="4.0" height="31.8" fill="#f0ece2"/><rect x="1518.5" y="548.9" width="2.0" height="31.8" fill="#b07070"/><rect x="1520.5" y="550.9" width="5.0" height="30.0" fill="#7a7f84"/><rect x="1525.5" y="550.2" width="4.0" height="30.9" fill="#e2cc7a"/><rect x="1529.5" y="548.3" width="2.5" height="33.0" fill="#c6d1d6"/><rect x="1532.0" y="548.3" width="2.5" height="33.2" fill="#6a5a52"/><rect x="1534.5" y="552.5" width="2.0" height="29.1" fill="#6f93ad"/><rect x="1536.5" y="551.8" width="3.5" height="29.8" fill="#dfe5e8"/><rect x="1540.0" y="550.3" width="3.5" height="31.6" fill="#b3c6d0"/><rect x="1543.5" y="551.9" width="5.0" height="30.2" fill="#3a3838"/><rect x="1548.5" y="548.9" width="3.5" height="33.4" fill="#6f93ad"/><rect x="1552.0" y="553.2" width="4.5" height="29.3" fill="#6a5a52"/><rect x="1556.5" y="552.1" width="2.0" height="30.6" fill="#6a5a52"/><rect x="1558.5" y="552.1" width="2.5" height="30.8" fill="#c6d1d6"/><rect x="1561.0" y="550.5" width="2.5" height="32.5" fill="#9a4a50"/><rect x="1563.5" y="549.4" width="5.0" height="33.8" fill="#b3c6d0"/><rect x="1568.5" y="554.2" width="4.5" height="29.3" fill="#6a5a52"/><rect x="1573.0" y="549.9" width="3.0" height="33.7" fill="#c6d1d6"/><rect x="1576.0" y="554.7" width="2.5" height="29.1" fill="#6a5a52"/><rect x="1578.5" y="550.9" width="2.0" height="33.1" fill="#e2cc7a"/><rect x="1586.0" y="547.7" width="3.5" height="25.3" fill="#d7d2c5"/><rect x="1589.5" y="547.5" width="3.5" height="25.8" fill="#6f93ad"/><rect x="1593.0" y="547.2" width="3.5" height="26.3" fill="#f4f2ec"/><rect x="1596.5" y="545.9" width="3.5" height="27.8" fill="#f4f2ec"/><rect x="1600.0" y="548.6" width="3.0" height="25.4" fill="#c6d1d6"/><rect x="1603.0" y="546.7" width="5.0" height="27.5" fill="#cfd8dc"/><rect x="1608.0" y="549.9" width="4.5" height="24.7" fill="#b3c6d0"/><rect x="1612.5" y="551.7" width="4.5" height="23.1" fill="#e2cc7a"/><rect x="1617.0" y="552.1" width="3.0" height="23.1" fill="#8a4a52"/><rect x="1620.0" y="551.6" width="3.0" height="23.8" fill="#cfd8dc"/><rect x="1623.0" y="549.7" width="3.0" height="26.0" fill="#f0ece2"/><rect x="1626.0" y="552.0" width="2.0" height="23.8" fill="#f4f2ec"/><rect x="1464.0" y="595.1" width="2.5" height="31.9" fill="#6a5a52"/><rect x="1466.5" y="592.9" width="4.5" height="34.2" fill="#3a3838"/><rect x="1471.0" y="596.6" width="4.5" height="30.7" fill="#e2cc7a"/><rect x="1475.5" y="595.9" width="3.0" height="31.6" fill="#e9e4d8"/><rect x="1478.5" y="593.4" width="5.0" height="34.2" fill="#6a5a52"/><rect x="1483.5" y="592.7" width="5.0" height="35.2" fill="#f0ece2"/><rect x="1488.5" y="597.7" width="4.0" height="30.4" fill="#b3c6d0"/><rect x="1492.5" y="594.2" width="4.0" height="34.0" fill="#e2cc7a"/><rect x="1496.5" y="594.9" width="3.0" height="33.5" fill="#f4f2ec"/><rect x="1499.5" y="595.2" width="4.0" height="33.4" fill="#4a5058"/><rect x="1503.5" y="595.9" width="3.5" height="32.8" fill="#d7d2c5"/><rect x="1507.0" y="596.0" width="3.0" height="32.9" fill="#f4f2ec"/><rect x="1510.0" y="594.9" width="2.5" height="34.1" fill="#3a3838"/><rect x="1512.5" y="595.7" width="3.0" height="33.4" fill="#e9e4d8"/><rect x="1515.5" y="593.9" width="4.5" height="35.3" fill="#e2cc7a"/><rect x="1520.0" y="594.4" width="3.0" height="35.1" fill="#d6bf85"/><rect x="1523.0" y="597.4" width="3.0" height="32.2" fill="#e4ddd0"/><rect x="1526.0" y="598.0" width="4.5" height="31.7" fill="#4a5058"/><rect x="1530.5" y="595.8" width="3.0" height="34.2" fill="#e4ddd0"/><rect x="1533.5" y="594.7" width="3.0" height="35.4" fill="#d6bf85"/><rect x="1536.5" y="598.2" width="4.5" height="32.0" fill="#d6bf85"/><rect x="1541.0" y="599.3" width="3.0" height="31.1" fill="#d6bf85"/><rect x="1544.0" y="598.9" width="2.0" height="31.6" fill="#efefea"/><rect x="1546.0" y="595.3" width="3.0" height="35.3" fill="#e9e4d8"/><rect x="1549.0" y="598.2" width="3.0" height="32.6" fill="#9a4a50"/><rect x="1552.0" y="599.3" width="4.5" height="31.6" fill="#b3c6d0"/><rect x="1556.5" y="598.4" width="2.0" height="32.7" fill="#cfd8dc"/><rect x="1558.5" y="597.8" width="3.0" height="33.4" fill="#f4f2ec"/><rect x="1561.5" y="599.4" width="5.0" height="31.9" fill="#d6bf85"/><rect x="1566.5" y="598.9" width="2.5" height="32.6" fill="#3a3838"/><rect x="1569.0" y="596.9" width="5.0" height="34.7" fill="#3a3838"/><rect x="1574.0" y="597.0" width="3.5" height="34.8" fill="#d7d2c5"/><rect x="1577.5" y="599.7" width="3.0" height="32.3" fill="#b07070"/><rect x="1461.0" y="642.2" width="5.0" height="17.8" fill="#3a3838"/><rect x="1466.0" y="642.6" width="5.0" height="17.4" fill="#e2cc7a"/><rect x="1471.0" y="641.3" width="2.0" height="18.7" fill="#cfd8dc"/><rect x="1473.0" y="638.6" width="3.0" height="21.4" fill="#c9826a"/><rect x="1476.0" y="639.5" width="4.0" height="20.5" fill="#e2cc7a"/><rect x="1480.0" y="638.4" width="3.0" height="21.6" fill="#e9e4d8"/><rect x="1483.0" y="639.7" width="5.0" height="20.3" fill="#9a4a50"/><rect x="1488.0" y="641.9" width="3.0" height="18.1" fill="#e2cc7a"/><rect x="1491.0" y="640.8" width="3.5" height="19.2" fill="#b07070"/><rect x="1494.5" y="643.6" width="2.5" height="16.4" fill="#b3c6d0"/><rect x="1497.0" y="640.2" width="3.0" height="19.8" fill="#3a3838"/><rect x="1500.0" y="638.8" width="5.0" height="21.2" fill="#b07070"/><rect x="1505.0" y="642.9" width="2.5" height="17.1" fill="#b07070"/><rect x="1507.5" y="640.8" width="3.5" height="19.2" fill="#d7d2c5"/><rect x="1511.0" y="641.8" width="2.5" height="18.2" fill="#c9826a"/><rect x="1513.5" y="643.7" width="3.5" height="16.3" fill="#c9826a"/><rect x="1517.0" y="643.4" width="3.5" height="16.6" fill="#f0ece2"/><rect x="1520.5" y="641.5" width="3.0" height="18.5" fill="#4a5058"/><rect x="1523.5" y="639.2" width="4.5" height="20.8" fill="#f4f2ec"/><rect x="1528.0" y="642.6" width="5.0" height="17.4" fill="#7a7f84"/><rect x="1533.0" y="642.9" width="3.5" height="17.1" fill="#dfe5e8"/><rect x="1536.5" y="641.2" width="4.0" height="18.8" fill="#9a4a50"/><rect x="1540.5" y="639.4" width="4.0" height="20.6" fill="#8a4a52"/><rect x="1544.5" y="640.1" width="4.5" height="19.9" fill="#d7d2c5"/><rect x="1549.0" y="644.1" width="2.0" height="15.9" fill="#e2cc7a"/><rect x="1551.0" y="641.4" width="3.5" height="18.6" fill="#7a7f84"/><rect x="1554.5" y="644.6" width="4.5" height="15.4" fill="#efefea"/><rect x="1559.0" y="641.5" width="2.5" height="18.5" fill="#dfe5e8"/><rect x="1561.5" y="644.0" width="3.5" height="16.0" fill="#6a5a52"/><rect x="1565.0" y="640.1" width="2.5" height="19.9" fill="#e2cc7a"/><rect x="1567.5" y="641.1" width="3.0" height="18.9" fill="#6a5a52"/><rect x="1570.5" y="642.5" width="4.5" height="17.5" fill="#d7d2c5"/><rect x="1575.0" y="641.9" width="4.0" height="18.1" fill="#dfe5e8"/><rect x="1579.0" y="642.4" width="2.0" height="17.6" fill="#cfd8dc"/><rect x="1581.0" y="643.0" width="4.5" height="17.0" fill="#b3c6d0"/><rect x="1585.5" y="642.4" width="3.0" height="17.6" fill="#e9e4d8"/><rect x="1588.5" y="641.3" width="4.5" height="18.7" fill="#c9826a"/><rect x="1593.0" y="641.9" width="3.5" height="18.1" fill="#b3c6d0"/><rect x="1596.5" y="640.6" width="3.0" height="19.4" fill="#dfe5e8"/><rect x="1599.5" y="641.4" width="4.0" height="18.6" fill="#6a5a52"/><polygon points="1478,445 1662,472 1662,485 1478,458" fill="#f3f3f2" /><polygon points="1472,489 1583,500 1583,511 1472,500" fill="#f3f3f2" /><polygon points="1469,532 1581,542 1581,551 1469,541" fill="#f3f3f2" /><polygon points="1466,579 1580,585 1580,593 1466,587" fill="#f3f3f2" /><polygon points="1462,627 1578,633 1578,641 1462,635" fill="#f3f3f2" /><polygon points="1585,505 1632,511 1632,517 1585,511" fill="#f3f3f2" /><polygon points="1583,544 1630,548 1630,554 1583,550" fill="#f3f3f2" /><polygon points="1635,510 1662,514 1662,519 1635,515" fill="#f3f3f2" /><polygon points="1635,548 1662,552 1662,557 1635,553" fill="#f3f3f2" /><polygon points="1581,470 1589,471 1586,660 1578,660" fill="#f5f5f4" /><polygon points="1629,476 1637,477 1636,600 1628,600" fill="#f5f5f4" /><ellipse cx="1503" cy="444" rx="4" ry="3" fill="#3a3230"/><path d="M1522 451l6-9 6 7z" fill="#4a3d38"/><path d="M1548 452c2-6 8-6 10 1" fill="none" stroke="#2c2624" stroke-width="2"/><rect x="1608" y="464" width="14" height="3" fill="#2c2c2c" transform="rotate(12 1615 465)"/><path d="M1571 577C1585 569 1610 568 1626 576L1612 612 1590 660H1579C1570 640 1562 615 1564 600z" fill="#3a86a8"/><circle cx="1595.9" cy="653.3" r="1" fill="#9ccfdc"/><circle cx="1579.1" cy="630.9" r="1" fill="#9ccfdc"/><circle cx="1580.5" cy="624.0" r="1" fill="#9ccfdc"/><circle cx="1583.8" cy="596.7" r="1" fill="#9ccfdc"/><circle cx="1575.7" cy="599.6" r="1" fill="#9ccfdc"/><circle cx="1601.7" cy="619.8" r="1" fill="#9ccfdc"/><circle cx="1577.7" cy="648.4" r="1" fill="#9ccfdc"/><circle cx="1604.9" cy="616.5" r="1" fill="#9ccfdc"/><circle cx="1574.9" cy="598.5" r="1" fill="#9ccfdc"/><circle cx="1573.2" cy="608.9" r="1" fill="#9ccfdc"/><circle cx="1573.2" cy="601.7" r="1" fill="#9ccfdc"/><circle cx="1579.0" cy="624.9" r="1" fill="#9ccfdc"/><circle cx="1601.1" cy="637.5" r="1" fill="#9ccfdc"/><circle cx="1584.4" cy="614.0" r="1" fill="#9ccfdc"/><circle cx="1588.3" cy="611.4" r="1" fill="#9ccfdc"/><circle cx="1581.8" cy="589.3" r="1" fill="#9ccfdc"/><circle cx="1579.7" cy="652.7" r="1" fill="#9ccfdc"/><circle cx="1574.4" cy="620.2" r="1" fill="#9ccfdc"/><circle cx="1592.0" cy="645.4" r="1" fill="#9ccfdc"/><circle cx="1577.6" cy="604.0" r="1" fill="#9ccfdc"/><circle cx="1578.7" cy="613.0" r="1" fill="#9ccfdc"/><circle cx="1585.6" cy="651.8" r="1" fill="#9ccfdc"/><circle cx="1599.7" cy="646.1" r="1" fill="#9ccfdc"/><circle cx="1570.8" cy="587.3" r="1" fill="#9ccfdc"/><circle cx="1594.8" cy="647.7" r="1" fill="#9ccfdc"/><circle cx="1586.6" cy="626.1" r="1" fill="#9ccfdc"/><circle cx="1570.0" cy="612.4" r="1" fill="#9ccfdc"/><circle cx="1602.4" cy="642.8" r="1" fill="#9ccfdc"/><circle cx="1599.9" cy="653.1" r="1" fill="#9ccfdc"/><circle cx="1578.7" cy="592.6" r="1" fill="#9ccfdc"/><path d="M1688 552L1732 552 1738 579C1730 595 1725 610 1718 615 1706 612 1694 605 1686 600z" fill="#d8a58d"/><path d="M1686 600C1696 607 1708 614 1718 615 1726 605 1732 590 1737 579L1774 660H1686z" fill="#1e4c9c"/><path d="M1690 635C1710 628 1740 630 1760 635L1772 660H1688z" fill="#183f88" opacity="0.7"/><path d="M1730 556L1745 557C1760 572 1790 600 1813 625 1840 650 1850 660 1860 660H1774L1737 579z" fill="#eeeeee"/><path d="M1745 557C1765 575 1790 600 1806 618L1800 643 1774 660" fill="none" stroke="#d9dbe0" stroke-width="3" opacity="0.8"/><path d="M1586 660C1590 640 1596 620 1603 611L1652 617 1671 575 1686 568 1688 660z" fill="#efefef"/><path d="M1671 575L1686 568 1688 660H1680z" fill="#f7f7f7"/><path d="M1611 607C1618 590 1626 572 1634 556L1672 566C1666 580 1658 600 1652 617 1638 617 1624 614 1611 607z" fill="#dcb19b"/><path d="M1639 532C1650 527 1664 527 1671 530 1678 538 1681 546 1679 552 1677 560 1675 566 1673 568 1662 571 1650 570 1645 568 1638 560 1636 548 1639 532z" fill="#dfb39c"/><path d="M1662 473C1670 460 1690 450 1709 448 1728 447 1742 456 1747 464 1751 478 1748 500 1747 515 1748 530 1751 540 1750 545 1746 549 1740 551 1736 549L1743 500 1709 470 1681 494 1679 526 1688 553 1675 558C1664 553 1656 540 1652 526 1652 505 1655 488 1662 473z" fill="#8b5b3b"/><path d="M1681 494C1690 480 1700 472 1709 470 1725 474 1738 484 1743 500 1744 515 1743 532 1737 549 1730 557 1720 564 1713 564 1705 564 1696 560 1688 553 1681 542 1679 526 1681 494z" fill="url(#skin)"/><path d="M1679 484C1690 474 1705 470 1712 470 1728 474 1740 484 1744 494L1744 488C1738 476 1726 466 1710 465 1696 466 1684 474 1679 484z" fill="#7e5134"/><ellipse cx="1707" cy="507" rx="4.5" ry="1.8" fill="#7a625c"/><ellipse cx="1734" cy="505" rx="4" ry="1.8" fill="#7a625c"/><path d="M1702 502c4-2 8-2 11 0M1729 500c3-1 7-1 9 1" stroke="#9a6a55" stroke-width="1" fill="none"/><path d="M1722 513l3 12-4 2" stroke="#b98068" stroke-width="1.2" fill="none"/><path d="M1713 542c5-2 11-2 16 0" stroke="#a86a5c" stroke-width="2.2" fill="none"/></g><g fill="#fff"><rect x="1453" y="651" width="2.5" height="5"/><rect x="1457.5" y="647" width="2.5" height="9"/><rect x="1462" y="643" width="2.5" height="13"/><rect x="1466.5" y="639" width="2.5" height="17"/></g><text x="1478" y="655" font-family="Liberation Sans" font-size="14.3" fill="#fff">Lara Lusa</text></svg>
<div style="left:0px;top:1030px;width:1920px;height:50px;background:#27323a;"></div>
<div style="left:0px;top:1030px;width:1920px;height:1px;background:#1a2025;"></div>
<svg style="left:20px;top:1045px;" width="21" height="21" viewBox="0 0 21 21"><g fill="#fff"><path d="M0 3l8.5-1.2v8H0z"/><path d="M9.5 1.6L20 0v9.8H9.5z"/><path d="M0 11h8.5v8L0 17.8z"/><path d="M9.5 11H20v10l-10.5-1.5z"/></g></svg>
<div style="left:60px;top:1030px;width:360px;height:50px;background:#f0f0f0;"></div>
<svg style="left:74px;top:1044px;" width="22" height="22" viewBox="0 0 22 22"><circle cx="13" cy="8.5" r="6.5" fill="none" stroke="#111" stroke-width="1.6"/><path d="M8.5 13.3L1.5 20.5" stroke="#111" stroke-width="1.8" stroke-linecap="round"/></svg>
<div class="t" style="left:110.0px;top:1046.8px;font-size:18.6px;color:#333;">Type here to search</div>
<svg style="left:320px;top:1033px;" width="100" height="47" viewBox="0 0 100 47"><defs><radialGradient id="sky" cx="0.5" cy="0.6" r="0.6"><stop offset="0" stop-color="#f6e9ee"/><stop offset="0.8" stop-color="#f2c6d2"/><stop offset="1" stop-color="#f0f0f0"/></radialGradient></defs><ellipse cx="52" cy="40" rx="45" ry="34" fill="url(#sky)"/><path d="M18 44l14-16 8 6 12-18 10 10 8-3 10 10 20 18H18z" fill="#9aa3d8"/><path d="M40 34l12-18 6 6-6 12z" fill="#d8a9c5"/><path d="M62 26l8-3 6 8-10 8z" fill="#6e7fc9"/><path d="M0 47c15-8 35-10 52-6 18-4 34 0 48 6z" fill="#8db870"/><path d="M6 46l5-16 5 16z M12 46l6-24 6 24z" fill="#2f6b3c"/><path d="M80 46l6-20 6 20z M88 46l4-12 4 12z" fill="#2f6b3c"/></svg>
<svg style="left:439px;top:1044px;" width="23" height="21" viewBox="0 0 23 21"><g fill="none" stroke="#fff" stroke-width="1.3"><path d="M1 1h13M1 20h13"/><rect x="1" y="5" width="13" height="11"/><path d="M19 1v19"/></g><rect x="17" y="7" width="4" height="6" fill="#fff"/></svg>
<svg style="left:498px;top:1040px;" width="32" height="31" viewBox="0 0 32 31"><defs><linearGradient id="e10" x1="0" y1="0" x2="1" y2="1"><stop offset="0" stop-color="#35c1f1"/><stop offset="0.55" stop-color="#1b89d9"/><stop offset="1" stop-color="#114a8b"/></linearGradient></defs><circle cx="15.5" cy="15.5" r="15" fill="url(#e10)"/><path d="M4 16C4 6 16 1 24 5c5 3 7 8 6 12-1 3-6 4-10 3-4 0-8 2-6 8-6-1-10-6-10-12z" fill="#3ddc84" opacity="0.75"/><circle cx="17" cy="17.5" r="6" fill="#125aa8"/></svg>
<svg style="left:559px;top:1042px;" width="32" height="26" viewBox="0 0 32 26"><path d="M1 2h11l3 3h16v20H1z" fill="#f5b63c"/><rect x="1" y="7" width="30" height="18" fill="#ffd35c"/><path d="M8 25v-10h16v10h-4v-6h-8v6z" fill="#3b8ad8"/></svg>
<div style="left:551px;top:1077px;width:51px;height:3px;background:#76b9ed;"></div>
<svg style="left:621px;top:1041px;" width="34" height="29" viewBox="0 0 34 29"><path d="M1 10L17 0l16 10v18H1z" fill="#0f6cbd"/><path d="M1 10h32v18H1z" fill="#2aa0ea"/><path d="M1 10l16 11 16-11" fill="#fff" opacity="0.95"/><path d="M1 28l16-11 16 11z" fill="#4cc2ff"/></svg>
<svg style="left:684px;top:1041px;" width="32" height="28" viewBox="0 0 32 28"><path d="M0 17l10-6 6-9c3-4 6 2 8 8l7 17-6-3-6 2-6-11-5 4z" fill="#e8832a"/><path d="M0 17l10-6 4 4-6 3z" fill="#3f8fd6"/><path d="M14 3l6 22 5-2c-2-8-5-18-8-21z" fill="#c73d1c"/></svg>
<svg style="left:746px;top:1040px;" width="32" height="30" viewBox="0 0 32 30"><circle cx="16" cy="16" r="14" fill="#ff6a2f"/><circle cx="16" cy="16.5" r="9" fill="#8b3fd9"/><circle cx="15.5" cy="16" r="4.5" fill="#4a1fb5"/><path d="M4 10c2-7 10-11 17-8-1 3 0 5 3 8 4 4 4 11 0 15" fill="#ffb23f" opacity="0.85"/></svg>
<div style="left:737px;top:1077px;width:51px;height:3px;background:#76b9ed;"></div>
<svg style="left:808px;top:1040px;" width="33" height="31" viewBox="0 0 33 31"><circle cx="17" cy="16" r="14" fill="#1f5fbf"/><path d="M3 14l14 6 14-6v10c-4 5-24 5-28 0z" fill="#e9eefa"/><path d="M4 13l13-6 13 6-13 7z" fill="#fff"/></svg>
<svg style="left:870px;top:1040px;" width="31" height="31" viewBox="0 0 31 31"><path d="M9 7V4a6 6 0 0 1 13 0v3" fill="none" stroke="#3aa3e0" stroke-width="2"/><rect x="1" y="7" width="29" height="23" rx="3" fill="#f4f4f4"/><rect x="9" y="12" width="6" height="6" fill="#f35325"/><rect x="16" y="12" width="6" height="6" fill="#81bc06"/><rect x="9" y="19" width="6" height="6" fill="#05a6f0"/><rect x="16" y="19" width="6" height="6" fill="#ffba08"/></svg>
<svg style="left:932px;top:1040px;" width="32" height="32" viewBox="0 0 32 32"><circle cx="16" cy="15.5" r="15" fill="#75a6d9"/><text x="16" y="25" text-anchor="middle" font-family="Liberation Serif" font-size="23" fill="#fff">R</text></svg>
<div style="left:923px;top:1077px;width:51px;height:3px;background:#76b9ed;"></div>
<div style="left:980px;top:1030px;width:61px;height:50px;background:#525a5f;"></div>
<svg style="left:995px;top:1040px;" width="31" height="31" viewBox="0 0 31 31"><circle cx="15.5" cy="15.5" r="15" fill="#1a5ff0"/><text x="15.5" y="18.5" text-anchor="middle" font-family="Liberation Sans" font-size="8" fill="#fff">zoom</text></svg>
<div style="left:980px;top:1077px;width:61px;height:3px;background:#76b9ed;"></div>
<svg style="left:1057px;top:1041px;" width="29" height="28" viewBox="0 0 29 28"><rect x="10" y="2" width="18" height="24" fill="#fff"/><g fill="#2b579a"><rect x="13" y="5" width="12" height="2"/><rect x="13" y="9" width="12" height="2"/><rect x="13" y="13" width="12" height="2"/><rect x="13" y="17" width="12" height="2"/><rect x="13" y="21" width="12" height="2"/></g><path d="M0 4l16-3v26L0 24z" fill="#2b579a"/><text x="8" y="18" text-anchor="middle" font-family="Liberation Sans" font-weight="bold" font-size="11" fill="#fff">W</text></svg>
<div style="left:1047px;top:1077px;width:51px;height:3px;background:#76b9ed;"></div>
<svg style="left:1243px;top:1041px;" width="32" height="30" viewBox="0 0 32 30"><circle cx="14" cy="15" r="13" fill="#1896d8" stroke="#fff" stroke-width="1.6"/><text x="14" y="21" text-anchor="middle" font-family="Liberation Sans" font-weight="bold" font-size="17" fill="#fff">?</text><circle cx="24" cy="22" r="6.5" fill="#e81123"/><text x="24" y="26" text-anchor="middle" font-family="Liberation Sans" font-weight="bold" font-size="10" fill="#fff">!</text></svg>
<svg style="left:1313px;top:1039px;" width="32" height="32" viewBox="0 0 32 32"><defs><linearGradient id="cl" x1="0" y1="0" x2="0" y2="1"><stop offset="0" stop-color="#c9dcf5"/><stop offset="1" stop-color="#8fb0e3"/></linearGradient></defs><path d="M6 29h19a6 6 0 0 0 1-12 8 8 0 0 0-15-2A7 7 0 0 0 6 29z" fill="url(#cl)"/><circle cx="23" cy="8" r="7" fill="#d83b3b"/><text x="23" y="11.5" text-anchor="middle" font-family="Liberation Sans" font-size="9" fill="#fff">1</text></svg>
<div class="t" style="left:1354.0px;top:1047.2px;font-size:17.2px;color:#f2f2f2;">23°C</div>
<div class="t" style="left:1402.8px;top:1046.5px;font-size:18.1px;color:#f2f2f2;">Mostly cloudy</div>
<svg style="left:1543px;top:1048px;" width="18" height="11" viewBox="0 0 18 11"><path d="M1 10l8-8 8 8" fill="none" stroke="#eee" stroke-width="1.5"/></svg>
<svg style="left:1574px;top:1046px;" width="17" height="17" viewBox="0 0 17 17"><g fill="none" stroke="#aaa" stroke-width="1.2"><path d="M1 15A14 14 0 0 1 15 1"/><path d="M4 15A11 11 0 0 1 15 4"/><path d="M7 15A8 8 0 0 1 15 7"/><path d="M10 15A5 5 0 0 1 15 10"/></g><circle cx="14" cy="14.5" r="1.6" fill="#fff"/></svg>
<svg style="left:1604px;top:1045px;" width="17" height="19" viewBox="0 0 17 19"><rect x="1" y="5" width="10" height="9" rx="2" fill="none" stroke="#ddd" stroke-width="1.2"/><path d="M11 8l5-3v9l-5-3" fill="none" stroke="#ddd" stroke-width="1.2"/><path d="M3 2a6 6 0 0 1 6 0M3 17a6 6 0 0 0 6 0" fill="none" stroke="#aaa"/></svg>
<svg style="left:1632px;top:1044px;" width="22" height="22" viewBox="0 0 22 22"><path d="M1 3l18-2v17L1 19z" fill="none" stroke="#ddd" stroke-width="1.2"/><path d="M7 8a4 4 0 0 1 7 0M14 12a4 4 0 0 1-7 0" fill="none" stroke="#ddd" stroke-width="1.1"/><circle cx="16" cy="18" r="4" fill="#3a7bd5"/></svg>
<svg style="left:1661px;top:1048px;" width="22" height="15" viewBox="0 0 22 15"><path d="M1 2v3h3M3 5v3" stroke="#ddd" stroke-width="1"/><rect x="4.5" y="3.5" width="15" height="9" fill="#fff" stroke="#ddd"/><rect x="19.5" y="6" width="2" height="4" fill="#ddd"/></svg>
<svg style="left:1692px;top:1045px;" width="22" height="19" viewBox="0 0 22 19"><path d="M1 6h4l6-5v17l-6-5H1z" fill="none" stroke="#ddd" stroke-width="1.2"/><path d="M14 6a5 5 0 0 1 0 7M17 3a9 9 0 0 1 0 13" fill="none" stroke="#ccc" stroke-width="1.1"/></svg>
<div class="t" style="left:1725.0px;top:1037.5px;font-size:14.3px;color:#f0f0f0;">ENG</div>
<div class="t" style="left:1539.5px;top:1059.4px;width:400px;text-align:center;font-size:14.3px;color:#f0f0f0;">SL</div>
<div class="t" style="left:1608.0px;top:1037.2px;width:400px;text-align:center;font-size:14.6px;color:#f0f0f0;">17:02</div>
<div class="t" style="left:1608.0px;top:1059.1px;width:400px;text-align:center;font-size:14.6px;color:#f0f0f0;">10/10/2023</div>
<svg style="left:1868px;top:1044px;" width="22" height="22" viewBox="0 0 22 22"><path d="M1 1h19v15h-7l-3 4-3-4H1z" fill="none" stroke="#eee" stroke-width="1.3"/></svg>
<div style="left:1914px;top:1031px;width:1px;height:49px;background:#556068;"></div>
</body></html>
